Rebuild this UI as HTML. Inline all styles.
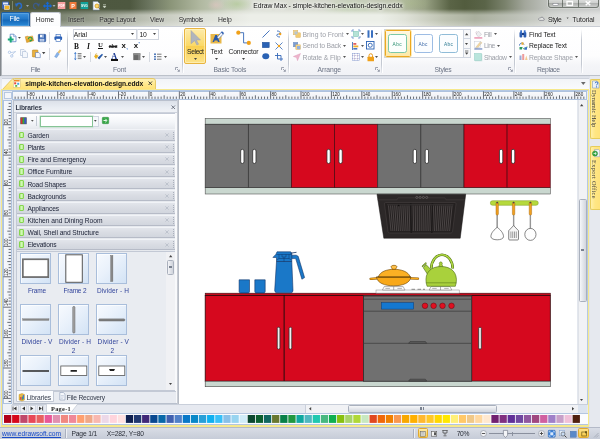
<!DOCTYPE html>
<html lang="en"><head><meta charset="utf-8"><title>Edraw Max - simple-kitchen-elevation-design.eddx</title>
<style>
html,body{margin:0;padding:0;background:#fff;}
body{width:600px;height:439px;overflow:hidden;font-family:'Liberation Sans',sans-serif;}
#app{will-change:transform;position:relative;width:600px;height:439px;overflow:hidden;background:#dfe3ea;}
#app div,#app span.t,#app svg{position:absolute;box-sizing:border-box;}
span.t{white-space:nowrap;display:block;}
svg{overflow:visible;}

</style></head>
<body>
<div id="app">
<div style="left:0px;top:0px;width:600px;height:26px;background:radial-gradient(ellipse 9px 6px at 216px 5px,rgba(232,196,196,.5),rgba(232,196,196,0)),radial-gradient(ellipse 16px 8px at 237px 4px,rgba(150,190,110,.4),rgba(150,190,110,0)),radial-gradient(ellipse 30px 9px at 350px 7px,rgba(150,186,118,.38),rgba(150,186,118,0)),radial-gradient(ellipse 22px 8px at 410px 3px,rgba(170,190,130,.3),rgba(170,190,130,0)),linear-gradient(to right,#4c563e 0px,#4e5840 130px,#6c7660 150px,#8a9478 170px,#b0b8a0 200px,#ccd2c2 230px,#dcdfd6 255px,#d9dcd2 300px,#ced3c4 350px,#bcc3ac 395px,#98a184 425px,#5a6446 450px,#525c3e 465px,#5a6448 485px,#7a826c 505px,#a3a79c 525px,#c2c5c1 550px,#cacccb 600px);"></div>
<div style="left:0px;top:8.5px;width:600px;height:17.5px;background:linear-gradient(to right,#6c7462 0px,#7e8674 62px,#9aa090 100px,#c0c4b8 150px,#dcdfd6 200px,#eceee8 250px,#ecefe8 380px,#dfe2d8 405px,#bcc1b0 445px,#aab09e 475px,#bcc0b6 515px,#d8dad8 560px,#e2e3e2 600px);-webkit-mask-image:linear-gradient(to bottom,rgba(0,0,0,0) 0px,rgba(0,0,0,.55) 3px,#000 6px);mask-image:linear-gradient(to bottom,rgba(0,0,0,0) 0px,rgba(0,0,0,.55) 3px,#000 6px);"></div>
<div style="left:0px;top:20px;width:600px;height:6px;background:linear-gradient(to bottom,rgba(255,255,255,0),rgba(255,255,255,.28));"></div>
<svg style="left:0;top:0" width="100" height="12" viewBox="0 0 100 12">
<rect x="2" y="1.5" width="7" height="7.5" rx="1" fill="#3c64b4"/><rect x="3" y="2.5" width="5" height="2" fill="#dfe8f8"/><rect x="4.5" y="5.5" width="5" height="4" fill="#f0b428" stroke="#fff" stroke-width=".5"/>
<rect x="12.3" y="1" width=".6" height="9" fill="#9aa48c"/>
<path d="M16.5 5.5 C17 2.5 21.5 2.5 21.5 6 C21.5 8 20 8.5 19 8.5" fill="none" stroke="#2a6cc8" stroke-width="1.5"/><path d="M15 3.2 L18.5 4.6 L16 7 Z" fill="#2a6cc8"/>
<path d="M26 5 l3 0 l-1.5 2z" fill="#9aa4b0"/>
<path d="M38.500 5.500 C38 2.500 33.500 2.500 33.500 6 C33.500 8 35 8.500 36 8.500" fill="none" stroke="#3a5c94" stroke-width="1.200" opacity=".85"/><path d="M40 3.200 L36.500 4.600 L39 7 Z" fill="#3a5c94" opacity=".85"/>
<path d="M47.500 1.500 l2 2.300 h-1.300 v1.500 h1.700 v-1.200 l2.300 1.900 l-2.300 1.900 v-1.200 h-1.700 v1.500 h1.300 l-2 2.300 l-2 -2.300 h1.300 v-1.500 h-1.700 v1.200 l-2.300 -1.900 l2.300 -1.900 v1.200 h1.700 v-1.500 h-1.300z" fill="#1868d0"/>
<path d="M52.500 5 l3 0 l-1.500 2z" fill="#a0aab4"/>
<rect x="57.700" y="2" width="7.600" height="7" fill="#f4a0a0"/><text x="61.500" y="6.800" font-size="3.200" font-weight="bold" fill="#fff" text-anchor="middle" font-family="Liberation Sans, sans-serif">PDF</text>
<rect x="69.500" y="2" width="7" height="7" fill="#ee7a3c"/><text x="73" y="7.600" font-size="5.400" font-weight="bold" fill="#fff" text-anchor="middle" font-family="Liberation Sans, sans-serif">P</text>
<rect x="80.600" y="2" width="7.600" height="7" fill="#12a098"/><text x="84.400" y="6.800" font-size="3.200" font-weight="bold" fill="#fff" text-anchor="middle" font-family="Liberation Sans, sans-serif">SVG</text>
<path d="M93 1.500 h4.500 l2 2 v6.500 h-6.500z" fill="#f4f6fa" stroke="#7a8aa6" stroke-width=".6"/><circle cx="97" cy="6" r="2" fill="#fdd66a" stroke="#c89018" stroke-width=".7"/><path d="M98.400 7.500 l1.600 1.800" stroke="#8a6a20" stroke-width="1"/>
</svg>
<svg style="left:102px;top:3px" width="6" height="6" viewBox="0 0 6 6"><path d="M1 1.500h3M1 3l1.500 2l1.500-2z" fill="#cfd6c6" stroke="#cfd6c6" stroke-width=".5"/></svg>
<span class="t" style="left:253.30px;top:1.97px;font-size:6.8px;line-height:8.84px;color:#111;letter-spacing:-0.056px;text-shadow:0 0 3px #fff,0 0 4px #fff,0 0 5px #fff;">Edraw Max - simple-kitchen-elevation-design.eddx</span>
<div style="left:547.5px;top:0px;width:51.5px;height:7.5px;border:1px solid rgba(60,70,60,.65);border-top:none;border-radius:0 0 3px 3px;background:linear-gradient(to bottom,rgba(255,255,255,.35),rgba(255,255,255,.08) 45%,rgba(0,0,0,.12) 50%,rgba(255,255,255,.1));box-shadow:0 0 0 .6px rgba(255,255,255,.45);"></div>
<div style="left:561.5px;top:0px;width:1px;height:7px;background:rgba(60,70,60,.6);"></div>
<div style="left:577.5px;top:0px;width:1px;height:7px;background:rgba(60,70,60,.6);"></div>
<svg style="left:548px;top:0" width="51" height="8" viewBox="0 0 51 8"><rect x="5" y="3.600" width="5" height="1.700" fill="#fff" stroke="#556" stroke-width=".3"/><rect x="19" y="1.400" width="5.500" height="4" fill="none" stroke="#fff" stroke-width="1.300"/><path d="M37.700 1.300 l4.600 4 M42.300 1.300 l-4.600 4" stroke="#fff" stroke-width="1.500"/></svg>
<div style="left:1px;top:12px;width:28.5px;height:13.5px;border-radius:2px 2px 0 0;border:1px solid #1b5fa8;border-bottom:none;background:linear-gradient(to bottom,#3f93dd 0%,#2378c8 45%,#1668b8 55%,#2a8ad8 100%);box-shadow:inset 0 0 0 .6px rgba(255,255,255,.3);"></div>
<span class="t" style="left:9.60px;top:14.97px;font-size:6.8px;line-height:8.84px;color:#fff;letter-spacing:-0.263px;">File</span>
<div style="left:29.8px;top:12px;width:31px;height:14.5px;border-radius:2.5px 2.5px 0 0;border:1px solid #c3c8d0;border-bottom:none;background:linear-gradient(to bottom,#ffffff,#fbfcfd);"></div>
<span class="t" style="left:35.80px;top:15.97px;font-size:6.8px;line-height:8.84px;color:#2a2a2a;letter-spacing:0.017px;">Home</span>
<span class="t" style="left:68.00px;top:15.97px;font-size:6.8px;line-height:8.84px;color:#2c2c2c;letter-spacing:-0.166px;text-shadow:0 0 2px rgba(255,255,255,.8);">Insert</span>
<span class="t" style="left:99.30px;top:15.97px;font-size:6.8px;line-height:8.84px;color:#2c2c2c;letter-spacing:-0.179px;text-shadow:0 0 2px rgba(255,255,255,.8);">Page Layout</span>
<span class="t" style="left:150.00px;top:15.97px;font-size:6.8px;line-height:8.84px;color:#2c2c2c;letter-spacing:-0.152px;text-shadow:0 0 2px rgba(255,255,255,.8);">View</span>
<span class="t" style="left:178.80px;top:15.97px;font-size:6.8px;line-height:8.84px;color:#2c2c2c;letter-spacing:-0.266px;text-shadow:0 0 2px rgba(255,255,255,.8);">Symbols</span>
<span class="t" style="left:218.00px;top:15.97px;font-size:6.8px;line-height:8.84px;color:#2c2c2c;letter-spacing:-0.045px;text-shadow:0 0 2px rgba(255,255,255,.8);">Help</span>
<svg style="left:537.500px;top:16px" width="6.500" height="5.800" viewBox="0 0 9 8"><path d="M2 6 h5.200 a1.400 1.400 0 0 0 .2-2.800 a2 2 0 0 0-3.800-.4 a1.600 1.600 0 0 0-1.600 3.200z" fill="rgba(255,255,255,.5)" stroke="#556" stroke-width=".7"/></svg>
<span class="t" style="left:548.00px;top:15.97px;font-size:6.8px;line-height:8.84px;color:#1c1c1c;letter-spacing:-0.362px;text-shadow:0 0 2px rgba(255,255,255,.8);">Style</span>
<svg style="left:566px;top:16.500px" width="3.500" height="2.800" viewBox="0 0 5 4"><path d="M.8 .8 h3 l-1.500 2z" fill="#555"/></svg>
<span class="t" style="left:572.50px;top:15.97px;font-size:6.8px;line-height:8.84px;color:#1c1c1c;letter-spacing:-0.051px;text-shadow:0 0 2px rgba(255,255,255,.8);">Tutorial</span>
<div style="left:0px;top:26px;width:600px;height:49.5px;background:linear-gradient(to bottom,#ffffff 0%,#fdfdfe 60%,#f4f5f8 80%,#f1f2f6 100%);border-top:1px solid #c9cdd4;border-bottom:1px solid #bcc1ca;"></div>
<div style="left:29.8px;top:25.5px;width:31px;height:1.5px;background:#fff;border-left:1px solid #c3c8d0;border-right:1px solid #c3c8d0;"></div>
<div style="left:0px;top:25.5px;width:2px;height:50.5px;background:linear-gradient(to right,#7e8388 0,#8a8f95 55%,#e4e7eb 100%);"></div>
<div style="left:67px;top:29px;width:1px;height:44px;background:linear-gradient(to bottom,rgba(190,196,206,0),#c4c9d2 25%,#c4c9d2 80%,rgba(190,196,206,.2));"></div>
<div style="left:68px;top:29px;width:1px;height:44px;background:rgba(255,255,255,.9);"></div>
<div style="left:181.5px;top:29px;width:1px;height:44px;background:linear-gradient(to bottom,rgba(190,196,206,0),#c4c9d2 25%,#c4c9d2 80%,rgba(190,196,206,.2));"></div>
<div style="left:182.5px;top:29px;width:1px;height:44px;background:rgba(255,255,255,.9);"></div>
<div style="left:288px;top:29px;width:1px;height:44px;background:linear-gradient(to bottom,rgba(190,196,206,0),#c4c9d2 25%,#c4c9d2 80%,rgba(190,196,206,.2));"></div>
<div style="left:289px;top:29px;width:1px;height:44px;background:rgba(255,255,255,.9);"></div>
<div style="left:381px;top:29px;width:1px;height:44px;background:linear-gradient(to bottom,rgba(190,196,206,0),#c4c9d2 25%,#c4c9d2 80%,rgba(190,196,206,.2));"></div>
<div style="left:382px;top:29px;width:1px;height:44px;background:rgba(255,255,255,.9);"></div>
<div style="left:514px;top:29px;width:1px;height:44px;background:linear-gradient(to bottom,rgba(190,196,206,0),#c4c9d2 25%,#c4c9d2 80%,rgba(190,196,206,.2));"></div>
<div style="left:515px;top:29px;width:1px;height:44px;background:rgba(255,255,255,.9);"></div>
<div style="left:581px;top:29px;width:1px;height:44px;background:linear-gradient(to bottom,rgba(190,196,206,0),#c4c9d2 25%,#c4c9d2 80%,rgba(190,196,206,.2));"></div>
<div style="left:582px;top:29px;width:1px;height:44px;background:rgba(255,255,255,.9);"></div>
<span class="t" style="left:30.80px;top:65.97px;font-size:6.8px;line-height:8.84px;color:#6b7384;letter-spacing:-0.438px;">File</span>
<span class="t" style="left:113.00px;top:65.97px;font-size:6.8px;line-height:8.84px;color:#6b7384;letter-spacing:-0.150px;">Font</span>
<span class="t" style="left:213.40px;top:65.97px;font-size:6.8px;line-height:8.84px;color:#6b7384;letter-spacing:-0.125px;">Basic Tools</span>
<span class="t" style="left:317.60px;top:65.97px;font-size:6.8px;line-height:8.84px;color:#6b7384;letter-spacing:-0.112px;">Arrange</span>
<span class="t" style="left:434.60px;top:65.97px;font-size:6.8px;line-height:8.84px;color:#6b7384;letter-spacing:-0.285px;">Styles</span>
<span class="t" style="left:537.00px;top:65.97px;font-size:6.8px;line-height:8.84px;color:#6b7384;letter-spacing:-0.334px;">Replace</span>
<svg style="left:174.5px;top:67px" width="5" height="5" viewBox="0 0 5 5"><path d="M.5 3V.5H3" fill="none" stroke="#8a90a0" stroke-width=".8"/><path d="M2 2l2.200 2.200M4.400 2.600v1.800h-1.800" fill="none" stroke="#8a90a0" stroke-width=".8"/></svg>
<svg style="left:280.5px;top:67px" width="5" height="5" viewBox="0 0 5 5"><path d="M.5 3V.5H3" fill="none" stroke="#8a90a0" stroke-width=".8"/><path d="M2 2l2.200 2.200M4.400 2.600v1.800h-1.800" fill="none" stroke="#8a90a0" stroke-width=".8"/></svg>
<svg style="left:374.5px;top:67px" width="5" height="5" viewBox="0 0 5 5"><path d="M.5 3V.5H3" fill="none" stroke="#8a90a0" stroke-width=".8"/><path d="M2 2l2.200 2.200M4.400 2.600v1.800h-1.800" fill="none" stroke="#8a90a0" stroke-width=".8"/></svg>
<svg style="left:507.5px;top:67px" width="5" height="5" viewBox="0 0 5 5"><path d="M.5 3V.5H3" fill="none" stroke="#8a90a0" stroke-width=".8"/><path d="M2 2l2.200 2.200M4.400 2.600v1.800h-1.800" fill="none" stroke="#8a90a0" stroke-width=".8"/></svg>
<svg style="left:7px;top:33px" width="11" height="10" viewBox="0 0 11 10"><path d="M3.200 1.200h3.600l2.200 2.200v5.300h-5.800z" fill="#fafcff" stroke="#4a78c0" stroke-width=".7"/><path d="M6.600 1.400v2.200h2.200" fill="none" stroke="#4a78c0" stroke-width=".5"/><path d="M3.700 3.600v5.800M.8 6.500h5.800" stroke="#18a878" stroke-width="1.900"/></svg>
<svg style="left:18.355px;top:36.65px" width="2.89" height="1.87" viewBox="0 0 3.400 2.200"><path d="M0 0h3.400l-1.700 2.200z" fill="#444"/></svg>
<svg style="left:24.5px;top:34px" width="9" height="9" viewBox="0 0 9 9"><g transform="rotate(-14 4.500 4.500)"><path d="M.8 1.800h2.600l.9.900h3.700v5h-7.200z" fill="#e8a830" stroke="#b87c10" stroke-width=".4"/><path d="M.8 3.400h7.200" stroke="#f4c868" stroke-width=".6"/></g><path d="M3.300 5.200a1.900 1.900 0 1 1 2.200 1.800" fill="none" stroke="#28a048" stroke-width="1.100"/><path d="M6.600 6.200l-1.700 1.700l-.4-2.200z" fill="#28a048"/></svg>
<svg style="left:38px;top:34px" width="8" height="8" viewBox="0 0 8 8"><rect x=".3" y=".3" width="7.400" height="7.400" rx=".7" fill="#2d5fb0" stroke="#1f478f" stroke-width=".5"/><rect x="2" y=".7" width="4" height="2.700" fill="#f0f4fc"/><rect x="4.600" y="1" width=".9" height="2" fill="#2d5fb0"/><rect x="1.700" y="4.800" width="4.600" height="2.700" fill="#dfe7f6"/><path d="M2.300 5.700h3.400M2.300 6.600h3.400" stroke="#5a80c4" stroke-width=".4"/></svg>
<div style="left:49.2px;top:31.5px;width:1px;height:12px;background:#d6dae1;"></div>
<svg style="left:54px;top:34px" width="8.5" height="8" viewBox="0 0 8.5 8"><rect x="2" y=".5" width="4.500" height="2.500" fill="#f0f4fc" stroke="#3468b8" stroke-width=".6"/><rect x=".4" y="2.600" width="7.700" height="3.400" rx=".9" fill="#2a60b8"/><rect x="2" y="4.700" width="4.500" height="2.700" fill="#fff" stroke="#3468b8" stroke-width=".6"/></svg>
<svg style="left:8px;top:49.5px" width="8.5" height="8" viewBox="0 0 8.5 8"><path d="M2.600 2.600l5.200-.9M4 5l3.600-4" stroke="#b4c8e4" stroke-width=".8"/><circle cx="1.500" cy="2.300" r="1.200" fill="none" stroke="#a8c0e4" stroke-width=".8"/><circle cx="3.800" cy="6" r="1.200" fill="none" stroke="#a8c0e4" stroke-width=".8"/></svg>
<svg style="left:20px;top:49px" width="8" height="9" viewBox="0 0 8 9"><path d="M.5 .5h3.500l1.500 1.500v4.500h-5z" fill="#f4f7fc" stroke="#a8b8d4" stroke-width=".6"/><path d="M2.500 2.500h3.500l1.500 1.500v4.500h-5z" fill="#f4f7fc" stroke="#a8b8d4" stroke-width=".6"/></svg>
<svg style="left:32px;top:49px" width="9" height="9" viewBox="0 0 9 9"><rect x=".4" y="1" width="5.500" height="7" rx=".6" fill="#e8b040" stroke="#b07c18" stroke-width=".5"/><path d="M3.500 3.500h3.300l1.500 1.500v3.600h-4.800z" fill="#f6f8fc" stroke="#5d78b0" stroke-width=".6"/></svg>
<svg style="left:42.3px;top:51.8px" width="3.4" height="2.2" viewBox="0 0 3.400 2.200"><path d="M0 0h3.400l-1.700 2.200z" fill="#444"/></svg>
<div style="left:49.2px;top:48px;width:1px;height:12px;background:#d6dae1;"></div>
<svg style="left:54px;top:49px" width="8" height="9" viewBox="0 0 8 9"><path d="M5.800 .4l1.600 1.200l-2.400 3.200l-1.600-1.200z" fill="#e8c070"/><path d="M3.200 3.400l2 1.500l-2.600 3.800l-2-1z" fill="#8ab4e8" stroke="#5a8ad0" stroke-width=".4"/></svg>
<div style="left:72.5px;top:29px;width:64px;height:10.5px;background:#fff;border:1px solid #d0d5de;"></div>
<div style="left:136.5px;top:29px;width:22px;height:10.5px;background:#fff;border:1px solid #d0d5de;border-left:1px solid #e4e7ec;"></div>
<span class="t" style="left:73.80px;top:30.98px;font-size:6.8px;line-height:8.84px;color:#222;letter-spacing:-0.079px;">Arial</span>
<svg style="left:130.77px;top:33.1px" width="3.06" height="1.98" viewBox="0 0 3.400 2.200"><path d="M0 0h3.400l-1.700 2.200z" fill="#444"/></svg>
<span class="t" style="left:139.40px;top:30.98px;font-size:6.8px;line-height:8.84px;color:#222;letter-spacing:-0.280px;">10</span>
<svg style="left:152.77px;top:33.1px" width="3.06" height="1.98" viewBox="0 0 3.400 2.200"><path d="M0 0h3.400l-1.700 2.200z" fill="#444"/></svg>
<span class="t" style="left:74.10px;top:41.98px;font-size:7.4px;line-height:9.62px;color:#111;letter-spacing:0.000px;font-weight:bold;font-family:'Liberation Serif', serif;">B</span>
<span class="t" style="left:87.10px;top:41.98px;font-size:7.4px;line-height:9.62px;color:#111;letter-spacing:0.000px;font-weight:bold;font-style:italic;font-family:'Liberation Serif', serif;">I</span>
<span class="t" style="left:98.00px;top:40.98px;font-size:6.8px;line-height:8.84px;color:#111;letter-spacing:0.000px;font-weight:bold;font-family:'Liberation Serif', serif;text-decoration:underline;">U</span>
<span class="t" style="left:108.80px;top:42.98px;font-size:5.6px;line-height:7.28px;color:#222;letter-spacing:-0.413px;font-weight:bold;text-decoration:line-through;">abc</span>
<span class="t" style="left:121.60px;top:40.98px;font-size:7.8px;line-height:10.14px;color:#111;letter-spacing:0.000px;font-weight:bold;">x</span>
<span class="t" style="left:126.20px;top:43.98px;font-size:6px;line-height:7.8px;color:#2a6cc8;letter-spacing:0.000px;font-weight:bold;">,</span>
<span class="t" style="left:133.80px;top:40.98px;font-size:7.8px;line-height:10.14px;color:#111;letter-spacing:0.000px;font-weight:bold;">x</span>
<span class="t" style="left:138.20px;top:40.98px;font-size:6px;line-height:7.8px;color:#2a6cc8;letter-spacing:0.000px;font-weight:bold;">’</span>
<svg style="left:73.5px;top:52px" width="8" height="8.5" viewBox="0 0 8 8.5"><path d="M1.300 0l1.300 1.800h-2.600zM1.300 8.300l1.300-1.800h-2.600z" fill="#2a6cc8"/><path d="M1.300 1.500v5" stroke="#2a6cc8" stroke-width=".7"/><path d="M3.700 1.500h3.800M3.700 3.200h3.800M3.700 4.900h3.800M3.700 6.600h3.800" stroke="#777" stroke-width=".9"/></svg>
<svg style="left:82.77px;top:55.5px" width="3.06" height="1.98" viewBox="0 0 3.400 2.200"><path d="M0 0h3.400l-1.700 2.200z" fill="#555"/></svg>
<div style="left:89.5px;top:51.5px;width:1px;height:10px;background:#d5d9e0;"></div>
<svg style="left:93.5px;top:52.5px" width="9" height="7" viewBox="0 0 9 7"><path d="M0 3.200l2-1.700l2.500 1.200l-2.500 3.300z" fill="#e8b020"/><path d="M3.500 4.800l4.500-4l1 1l-3.800 4.800z" fill="#2a5caa"/><path d="M1 1.200l1.200.4M2.500.3l.5 1" stroke="#c89010" stroke-width=".6"/></svg>
<svg style="left:103.87px;top:55.5px" width="3.06" height="1.98" viewBox="0 0 3.400 2.200"><path d="M0 0h3.400l-1.700 2.200z" fill="#555"/></svg>
<span class="t" style="left:111.20px;top:51.98px;font-size:8.2px;line-height:10.66px;color:#1d3c94;letter-spacing:0.000px;font-weight:bold;font-family:'Liberation Serif', serif;">A</span>
<div style="left:110.5px;top:59px;width:7.5px;height:1.8px;background:#111;"></div>
<svg style="left:120.77px;top:55.5px" width="3.06" height="1.98" viewBox="0 0 3.400 2.200"><path d="M0 0h3.400l-1.700 2.200z" fill="#555"/></svg>
<svg style="left:132.5px;top:52.5px" width="8" height="7.5" viewBox="0 0 8 7.5"><rect x=".3" y=".3" width="7" height="6.800" fill="#6a6a6a"/><rect x=".3" y=".3" width="7" height="1.800" fill="#8a8a8a"/><rect x="5" y=".3" width="2.300" height="6.800" fill="#9a9a9a" opacity=".6"/></svg>
<svg style="left:141.67px;top:55.5px" width="3.06" height="1.98" viewBox="0 0 3.400 2.200"><path d="M0 0h3.400l-1.700 2.200z" fill="#555"/></svg>
<div style="left:148.5px;top:51.5px;width:1px;height:10px;background:#d5d9e0;"></div>
<svg style="left:153.5px;top:52.5px" width="8" height="7.5" viewBox="0 0 8 7.5"><circle cx="1" cy="1.200" r=".9" fill="#2a5caa"/><circle cx="1" cy="3.700" r=".9" fill="#2a5caa"/><circle cx="1" cy="6.200" r=".9" fill="#2a5caa"/><path d="M3 1.200h4.500M3 3.700h4.500M3 6.200h4.500" stroke="#777" stroke-width="1"/></svg>
<svg style="left:164.27px;top:55.5px" width="3.06" height="1.98" viewBox="0 0 3.400 2.200"><path d="M0 0h3.400l-1.700 2.200z" fill="#555"/></svg>
<div style="left:184.4px;top:27.8px;width:21.8px;height:35.8px;border:1px solid #e8b440;border-radius:2px;background:linear-gradient(to bottom,#fdebaa 0%,#fbd968 49%,#f9cf50 51%,#fce38a 100%);box-shadow:inset 0 0 0 .7px rgba(255,245,200,.8);"></div>
<svg style="left:189.5px;top:30px" width="12" height="15" viewBox="0 0 12 15"><path d="M1 .5l9.500 9.500h-4.200l2.300 4.200l-1.700.8l-2.200-4.300l-3.700 3z" fill="#b0b4bc" stroke="#9da2ac" stroke-width=".5"/></svg>
<span class="t" style="left:187.00px;top:47.98px;font-size:6.8px;line-height:8.84px;color:#222;letter-spacing:-0.382px;">Select</span>
<svg style="left:193.87px;top:57.6px" width="3.06" height="1.98" viewBox="0 0 3.400 2.200"><path d="M0 0h3.400l-1.700 2.200z" fill="#444"/></svg>
<svg style="left:209.5px;top:31px" width="14" height="13" viewBox="0 0 14 13"><rect x=".5" y="3" width="11" height="9.500" fill="#e8b84a"/><path d="M2.500 11l2.800-7h1.600l2.800 7h-1.800l-.5-1.600h-2.800l-.5 1.600z" fill="#2858a8"/><path d="M7 6.500l4.500-5.500l2 1.800l-4.800 5z" fill="#f4f6fa" stroke="#3060b0" stroke-width=".6"/><path d="M11 1.500l1-1.200l2 1.800l-1 1.200z" fill="#3060b0"/></svg>
<span class="t" style="left:210.60px;top:47.98px;font-size:6.8px;line-height:8.84px;color:#222;letter-spacing:-0.166px;">Text</span>
<svg style="left:214.97px;top:57.6px" width="3.06" height="1.98" viewBox="0 0 3.400 2.200"><path d="M0 0h3.400l-1.700 2.200z" fill="#444"/></svg>
<svg style="left:236px;top:29.5px" width="16" height="16" viewBox="0 0 16 16"><path d="M2.300 2.700h5.300v10.200h5" fill="none" stroke="#3468b8" stroke-width=".9"/><circle cx="2.300" cy="2.700" r="2.100" fill="#f0a018"/><circle cx="12.800" cy="12.900" r="2.100" fill="#f0a018"/></svg>
<span class="t" style="left:228.40px;top:47.98px;font-size:6.8px;line-height:8.84px;color:#222;letter-spacing:-0.151px;">Connector</span>
<svg style="left:241.87px;top:57.6px" width="3.06" height="1.98" viewBox="0 0 3.400 2.200"><path d="M0 0h3.400l-1.700 2.200z" fill="#444"/></svg>
<svg style="left:261.5px;top:30px" width="8" height="8" viewBox="0 0 8 8"><path d="M.5 7.500l7-7" stroke="#3468b8" stroke-width=".9"/></svg>
<svg style="left:261.8px;top:41.8px" width="7.5" height="6" viewBox="0 0 7.5 6"><rect x=".3" y=".3" width="6.900" height="5.400" fill="#2a62b4" stroke="#1e4c94" stroke-width=".5"/></svg>
<svg style="left:261.8px;top:52.8px" width="7.5" height="6.5" viewBox="0 0 7.5 6.5"><ellipse cx="3.750" cy="3.250" rx="3.500" ry="3" fill="#2a62b4"/></svg>
<svg style="left:274.5px;top:30px" width="7" height="8" viewBox="0 0 7 8"><path d="M2 1c4 0 4 3 1.500 3s-2.500 3 1.500 3" fill="none" stroke="#3468b8" stroke-width=".9"/><circle cx="5.200" cy="4" r="1.200" fill="#f0a018"/></svg>
<svg style="left:274.5px;top:41.5px" width="8" height="8" viewBox="0 0 8 8"><path d="M.5 .5l7 7M7.500 .5l-7 7" stroke="#3468b8" stroke-width=".8"/><circle cx="4" cy="4" r="1.300" fill="#f0a018"/></svg>
<svg style="left:274.5px;top:52.5px" width="8" height="8" viewBox="0 0 8 8"><path d="M2.500 0v6h5.500M0 2.500h6v5.500" fill="none" stroke="#3468b8" stroke-width=".9"/></svg>
<svg style="left:292.5px;top:30px" width="8" height="8" viewBox="0 0 8 8"><g opacity="0.72"><rect x=".3" y=".3" width="4.500" height="4.500" fill="#f0c050" stroke="#c89020" stroke-width=".4"/><rect x="2.800" y="2.800" width="4.700" height="4.700" fill="#f0b838" stroke="#c89020" stroke-width=".4"/><rect x="1.500" y="1.500" width="3" height="3" fill="#8ab0e0" opacity=".8"/></g></svg>
<svg style="left:292.5px;top:41.5px" width="8" height="8" viewBox="0 0 8 8"><g opacity="0.72"><rect x=".3" y=".3" width="4.500" height="4.500" fill="#4a78c0" stroke="#2a58a0" stroke-width=".4"/><rect x="2.800" y="2.800" width="4.700" height="4.700" fill="#f0c050" stroke="#c89020" stroke-width=".4"/><rect x="4" y="4" width="3.200" height="3.200" fill="#6a94d4"/></g></svg>
<svg style="left:292.5px;top:53px" width="8" height="8" viewBox="0 0 8 8"><g opacity="0.72"><path d="M.3 3.500l7.200-3l-3 7.200l-1-3.200z" fill="#e89ab8" stroke="#d070a0" stroke-width=".4"/></g></svg>
<span class="t" style="left:302.60px;top:30.98px;font-size:6.8px;line-height:8.84px;color:#9da0a8;letter-spacing:-0.013px;">Bring to Front</span>
<span class="t" style="left:302.60px;top:41.98px;font-size:6.8px;line-height:8.84px;color:#9da0a8;letter-spacing:-0.169px;">Send to Back</span>
<span class="t" style="left:302.60px;top:53.98px;font-size:6.8px;line-height:8.84px;color:#9da0a8;letter-spacing:-0.099px;">Rotate &amp; Flip</span>
<svg style="left:345.77px;top:33.1px" width="3.06" height="1.98" viewBox="0 0 3.400 2.200"><path d="M0 0h3.400l-1.700 2.200z" fill="#555"/></svg>
<svg style="left:343.47px;top:44.8px" width="3.06" height="1.98" viewBox="0 0 3.400 2.200"><path d="M0 0h3.400l-1.700 2.200z" fill="#555"/></svg>
<svg style="left:343.07px;top:56.3px" width="3.06" height="1.98" viewBox="0 0 3.400 2.200"><path d="M0 0h3.400l-1.700 2.200z" fill="#555"/></svg>
<svg style="left:351.5px;top:30px" width="8" height="8" viewBox="0 0 8 8"><g opacity="0.72"><rect x="1.500" y="1.500" width="5" height="5" fill="#9ad8c8" stroke="#38a890" stroke-width=".5"/><path d="M0 2v-2h2M6 0h2v2M8 6v2h-2M2 8h-2v-2" fill="none" stroke="#2a62b4" stroke-width=".8"/></g></svg>
<svg style="left:360.77px;top:33.1px" width="3.06" height="1.98" viewBox="0 0 3.400 2.200"><path d="M0 0h3.400l-1.700 2.200z" fill="#555"/></svg>
<svg style="left:352px;top:41.5px" width="7" height="8" viewBox="0 0 7 8"><path d="M.5 0v8" stroke="#2a62b4" stroke-width=".8"/><rect x="1.300" y="1" width="3" height="1.800" fill="#e06060"/><rect x="1.300" y="3.500" width="5" height="1.800" fill="#f0b030"/><rect x="1.300" y="6" width="4" height="1.600" fill="#4a78c0"/></svg>
<svg style="left:360.77px;top:44.8px" width="3.06" height="1.98" viewBox="0 0 3.400 2.200"><path d="M0 0h3.400l-1.700 2.200z" fill="#555"/></svg>
<svg style="left:351.5px;top:53px" width="8" height="8" viewBox="0 0 8 8"><g opacity="0.72"><path d="M2.500 0v8M5.500 0v8M0 2.500h8M0 5.500h8" stroke="#7a6aa8" stroke-width=".6" stroke-dasharray="1 .6"/><rect x=".3" y=".3" width="7.400" height="7.400" fill="none" stroke="#5a78c0" stroke-width=".5"/></g></svg>
<svg style="left:360.77px;top:56.3px" width="3.06" height="1.98" viewBox="0 0 3.400 2.200"><path d="M0 0h3.400l-1.700 2.200z" fill="#555"/></svg>
<svg style="left:367px;top:30px" width="7" height="8" viewBox="0 0 7 8"><rect x=".5" y=".3" width="2" height="7.400" fill="#3a70c0"/><rect x="4" y=".3" width="2" height="7.400" fill="#3a70c0"/></svg>
<svg style="left:375.27px;top:33.1px" width="3.06" height="1.98" viewBox="0 0 3.400 2.200"><path d="M0 0h3.400l-1.700 2.200z" fill="#555"/></svg>
<svg style="left:366.3px;top:41.3px" width="8.5" height="8.5" viewBox="0 0 8.5 8.5"><rect x=".5" y=".5" width="7.500" height="7.500" fill="none" stroke="#2a62b4" stroke-width=".9"/><circle cx="4.250" cy="4.250" r="2" fill="none" stroke="#2a62b4" stroke-width=".9"/></svg>
<svg style="left:366.8px;top:52.5px" width="7.5" height="8.5" viewBox="0 0 7.5 8.5"><path d="M2 4v-1.500a1.750 1.750 0 0 1 3.500 0v1.500" fill="none" stroke="#e89818" stroke-width="1"/><rect x=".5" y="3.800" width="6.500" height="4.500" rx=".5" fill="#f0a018"/></svg>
<svg style="left:375.27px;top:56.3px" width="3.06" height="1.98" viewBox="0 0 3.400 2.200"><path d="M0 0h3.400l-1.700 2.200z" fill="#555"/></svg>
<div style="left:384px;top:29px;width:86.5px;height:28.5px;background:#fff;border:1px solid #d0d6e0;"></div>
<div style="left:385px;top:30px;width:25.5px;height:26.5px;border:1.500px solid #eda820;border-radius:1.500px;background:linear-gradient(to bottom,#fff8e0,#fde9a8);box-shadow:0 0 0 .5px #f8d878;"></div>
<div style="left:388px;top:33.5px;width:18.8px;height:19.2px;border:1px solid #7cc8a8;border-radius:2.500px;background:#fbfffd;"></div>
<div style="left:414px;top:33.5px;width:18.6px;height:19.2px;border:1px solid #9cbce4;border-radius:2.500px;background:#fbfdff;"></div>
<div style="left:439.4px;top:33.5px;width:18.8px;height:19.2px;border:1px solid #90bcd8;border-radius:2.500px;background:#fbfdff;"></div>
<span class="t" style="left:392.60px;top:41.98px;font-size:4.8px;line-height:6.24px;color:#2a9070;letter-spacing:0.378px;">Abc</span>
<span class="t" style="left:418.60px;top:41.98px;font-size:4.8px;line-height:6.24px;color:#3a68a8;letter-spacing:0.311px;">Abc</span>
<span class="t" style="left:444.00px;top:41.98px;font-size:4.8px;line-height:6.24px;color:#2a7890;letter-spacing:0.378px;">Abc</span>
<div style="left:462.5px;top:29px;width:8px;height:28.5px;background:#f6f7f9;border:1px solid #d0d6e0;"></div>
<div style="left:462.5px;top:38.3px;width:8px;height:1px;background:#d0d6e0;"></div>
<div style="left:462.5px;top:47.6px;width:8px;height:1px;background:#d0d6e0;"></div>
<svg style="left:465px;top:33px" width="3.4" height="2.2" viewBox="0 0 3.4 2.2"><path d="M0 2.200h3.400l-1.700-2.200z" fill="#444"/></svg>
<svg style="left:465.17px;top:42.6px" width="3.06" height="1.98" viewBox="0 0 3.400 2.200"><path d="M0 0h3.400l-1.700 2.200z" fill="#444"/></svg>
<svg style="left:465px;top:50.5px" width="3.4" height="4" viewBox="0 0 3.4 4"><path d="M0 0h3.400" stroke="#444" stroke-width=".7"/><path d="M0 1.500h3.400l-1.700 2.200z" fill="#444"/></svg>
<svg style="left:473.5px;top:29.5px" width="9" height="9" viewBox="0 0 9 9"><g opacity="0.72"><path d="M2 4l2.500-3l3 3.500l-3 2.500z" fill="#e8e8ec" stroke="#a8a8b0" stroke-width=".5"/><path d="M3 1.500c-1.500 0-1.500 2 0 2.500" fill="none" stroke="#c0a0b0" stroke-width=".6"/><rect x=".3" y="7" width="8" height="1.800" fill="#e888a8"/></g></svg>
<svg style="left:473.5px;top:41px" width="9" height="9" viewBox="0 0 9 9"><g opacity="0.72"><path d="M2 6l4.500-5.500l1.500 1.200l-4.500 5.500l-2 .6z" fill="#f0c878" stroke="#b8a070" stroke-width=".4"/><rect x=".3" y="7.200" width="8" height="1.500" fill="#5a78b8"/><rect x=".3" y=".5" width="6" height="6" fill="none" stroke="#b0b8c8" stroke-width=".5"/></g></svg>
<svg style="left:473.5px;top:52.5px" width="8.5" height="8.5" viewBox="0 0 8.5 8.5"><g opacity="0.72"><rect x="1" y="1" width="7.300" height="7.300" fill="#b8d8d4"/><rect x=".3" y=".3" width="7.200" height="7.200" fill="#a0dcd0" stroke="#78c0b4" stroke-width=".5"/></g></svg>
<span class="t" style="left:484.00px;top:30.98px;font-size:6.8px;line-height:8.84px;color:#9da0a8;letter-spacing:-0.270px;">Fill</span>
<span class="t" style="left:484.00px;top:41.98px;font-size:6.8px;line-height:8.84px;color:#9da0a8;letter-spacing:-0.538px;">Line</span>
<span class="t" style="left:484.00px;top:53.98px;font-size:6.8px;line-height:8.84px;color:#9da0a8;letter-spacing:-0.310px;">Shadow</span>
<svg style="left:493.97px;top:33.3px" width="3.06" height="1.98" viewBox="0 0 3.400 2.200"><path d="M0 0h3.400l-1.700 2.200z" fill="#555"/></svg>
<svg style="left:497.17px;top:44.9px" width="3.06" height="1.98" viewBox="0 0 3.400 2.200"><path d="M0 0h3.400l-1.700 2.200z" fill="#555"/></svg>
<svg style="left:508.77px;top:56.2px" width="3.06" height="1.98" viewBox="0 0 3.400 2.200"><path d="M0 0h3.400l-1.700 2.200z" fill="#555"/></svg>
<svg style="left:519px;top:30px" width="8" height="8" viewBox="0 0 8 8"><rect x=".5" y="2" width="2.800" height="5.500" rx="1" fill="#2a5cb0"/><rect x="4.500" y="2" width="2.800" height="5.500" rx="1" fill="#2a5cb0"/><rect x="1.200" y=".3" width="1.800" height="3" fill="#3a70c8"/><rect x="4.800" y=".3" width="1.800" height="3" fill="#3a70c8"/><rect x="3" y="3" width="2" height="2" fill="#1a3c80"/></svg>
<svg style="left:519px;top:41.5px" width="9" height="8" viewBox="0 0 9 8"><path d="M.5 3.500c0-3 4-3 4.500-1" fill="none" stroke="#2a62b4" stroke-width=".9"/><rect x="2.500" y=".3" width="2" height="2.500" fill="#f0b030"/><path d="M8 4.500c0 3-4 3-4.500 1" fill="none" stroke="#28a050" stroke-width=".9"/><rect x="5.500" y="5.200" width="2.500" height="2.500" fill="#3a70c8"/><rect x=".5" y="5" width="2.500" height="2.500" fill="#2a9a60"/></svg>
<svg style="left:519px;top:53px" width="9" height="8" viewBox="0 0 9 8"><g opacity="0.72"><rect x=".5" y="2.500" width="2" height="4.500" fill="#7a90c8"/><rect x="3.200" y="1" width="2" height="6" fill="#e87878"/><path d="M6 7l1.300-4.500l1.300 4.500z" fill="#f0b868"/></g></svg>
<span class="t" style="left:529.00px;top:30.98px;font-size:6.8px;line-height:8.84px;color:#222;letter-spacing:-0.120px;">Find Text</span>
<span class="t" style="left:529.00px;top:41.98px;font-size:6.8px;line-height:8.84px;color:#222;letter-spacing:-0.124px;">Replace Text</span>
<span class="t" style="left:529.00px;top:53.98px;font-size:6.8px;line-height:8.84px;color:#9da0a8;letter-spacing:-0.214px;">Replace Shape</span>
<svg style="left:575.47px;top:56.2px" width="3.06" height="1.98" viewBox="0 0 3.400 2.200"><path d="M0 0h3.400l-1.700 2.200z" fill="#555"/></svg>
<div style="left:0px;top:75.5px;width:600px;height:14px;background:linear-gradient(to bottom,#d9dde6 0,#e3e6ee 3px,#eceef4 14px);"></div>
<div style="left:2px;top:77.5px;width:586.5px;height:12px;background:linear-gradient(to bottom,#f2f4f8,#fafbfd);border-top:1px solid #cdd2dc;"></div>
<svg style="left:1px;top:77.5px" width="160" height="12.5" viewBox="0 0 160 12.5"><defs><linearGradient id="tg" x1="0" y1="0" x2="0" y2="1"><stop offset="0" stop-color="#fff3b8"/><stop offset=".5" stop-color="#ffe88a"/><stop offset="1" stop-color="#ffe070"/></linearGradient></defs><path d="M0.500 12.500 L10.500 1.800 Q11.500 .500 13.500 .500 H152 Q154.500 .500 154.500 3 V12.500z" fill="url(#tg)" stroke="#e2c050" stroke-width=".8"/></svg>
<svg style="left:13px;top:79px" width="8" height="9" viewBox="0 0 8 9"><rect x=".3" y=".3" width="7" height="8" fill="#fdfdf8" stroke="#c8b060" stroke-width=".4"/><rect x="1" y="1" width="5.600" height="1.500" fill="#f08828"/><rect x="1.200" y="3.300" width="2" height="2" fill="#e84838"/><rect x="4.200" y="3.800" width="2" height="2" fill="#48a8e0"/><rect x="2.200" y="6" width="2" height="1.800" fill="#58b848"/></svg>
<span class="t" style="left:25.30px;top:79.97px;font-size:6.7px;line-height:8.71px;color:#111;letter-spacing:-0.036px;font-weight:bold;">simple-kitchen-elevation-design.eddx</span>
<svg style="left:147.8px;top:80.8px" width="4.5" height="4.5" viewBox="0 0 4.5 4.5"><path d="M.5 .5l3.500 3.500M4 .5l-3.500 3.500" stroke="#333" stroke-width=".9"/></svg>
<svg style="left:580.8px;top:81.8px" width="4.6" height="3" viewBox="0 0 4.6 3"><path d="M0 0h4.600l-2.300 3z" fill="#6a6a6a"/></svg>
<div style="left:1px;top:89.3px;width:588px;height:337.5px;border:1.500px solid #f5e88c;border-bottom-width:2px;background:#e3e7ee;box-shadow:inset 0 0 0 1px #b4c8e4;"></div>
<div style="left:2.5px;top:90.8px;width:585.5px;height:9px;background:#e9edf3;"></div><div style="left:3.5px;top:91.5px;width:8px;height:7.5px;background:#f4f6fa;border:1px solid #b8c8e0;"></div><div style="left:12px;top:91px;width:574.5px;height:8.5px;background:linear-gradient(to bottom,#f8f9fc,#edf0f5);border:1px solid #aec2de;"></div><svg style="left:12px;top:91px" width="574.5" height="8.5" viewBox="0 0 574.5 8.5"><g stroke="#3a3f4a" stroke-width=".75" fill="none"><path d="M3.14 7.90V5.60" /><path d="M6.18 7.90V5.60" /><path d="M9.22 7.90V5.60" /><path d="M12.26 7.90V5.60" /><path d="M15.30 7.90V0.40" /><path d="M18.34 7.90V5.60" /><path d="M21.38 7.90V5.60" /><path d="M24.43 7.90V5.60" /><path d="M27.47 7.90V5.60" /><path d="M30.51 7.90V4.30" /><path d="M33.55 7.90V5.60" /><path d="M36.59 7.90V5.60" /><path d="M39.63 7.90V5.60" /><path d="M42.67 7.90V5.60" /><path d="M45.71 7.90V0.40" /><path d="M48.76 7.90V5.60" /><path d="M51.80 7.90V5.60" /><path d="M54.84 7.90V5.60" /><path d="M57.88 7.90V5.60" /><path d="M60.92 7.90V4.30" /><path d="M63.96 7.90V5.60" /><path d="M67.00 7.90V5.60" /><path d="M70.04 7.90V5.60" /><path d="M73.08 7.90V5.60" /><path d="M76.13 7.90V0.40" /><path d="M79.17 7.90V5.60" /><path d="M82.21 7.90V5.60" /><path d="M85.25 7.90V5.60" /><path d="M88.29 7.90V5.60" /><path d="M91.33 7.90V4.30" /><path d="M94.37 7.90V5.60" /><path d="M97.41 7.90V5.60" /><path d="M100.46 7.90V5.60" /><path d="M103.50 7.90V5.60" /><path d="M106.54 7.90V0.40" /><path d="M109.58 7.90V5.60" /><path d="M112.62 7.90V5.60" /><path d="M115.66 7.90V5.60" /><path d="M118.70 7.90V5.60" /><path d="M121.74 7.90V4.30" /><path d="M124.79 7.90V5.60" /><path d="M127.83 7.90V5.60" /><path d="M130.87 7.90V5.60" /><path d="M133.91 7.90V5.60" /><path d="M136.95 7.90V0.40" /><path d="M139.99 7.90V5.60" /><path d="M143.03 7.90V5.60" /><path d="M146.07 7.90V5.60" /><path d="M149.11 7.90V5.60" /><path d="M152.16 7.90V4.30" /><path d="M155.20 7.90V5.60" /><path d="M158.24 7.90V5.60" /><path d="M161.28 7.90V5.60" /><path d="M164.32 7.90V5.60" /><path d="M167.36 7.90V0.40" /><path d="M170.40 7.90V5.60" /><path d="M173.44 7.90V5.60" /><path d="M176.49 7.90V5.60" /><path d="M179.53 7.90V5.60" /><path d="M182.57 7.90V4.30" /><path d="M185.61 7.90V5.60" /><path d="M188.65 7.90V5.60" /><path d="M191.69 7.90V5.60" /><path d="M194.73 7.90V5.60" /><path d="M197.77 7.90V0.40" /><path d="M200.82 7.90V5.60" /><path d="M203.86 7.90V5.60" /><path d="M206.90 7.90V5.60" /><path d="M209.94 7.90V5.60" /><path d="M212.98 7.90V4.30" /><path d="M216.02 7.90V5.60" /><path d="M219.06 7.90V5.60" /><path d="M222.10 7.90V5.60" /><path d="M225.14 7.90V5.60" /><path d="M228.19 7.90V0.40" /><path d="M231.23 7.90V5.60" /><path d="M234.27 7.90V5.60" /><path d="M237.31 7.90V5.60" /><path d="M240.35 7.90V5.60" /><path d="M243.39 7.90V4.30" /><path d="M246.43 7.90V5.60" /><path d="M249.47 7.90V5.60" /><path d="M252.52 7.90V5.60" /><path d="M255.56 7.90V5.60" /><path d="M258.60 7.90V0.40" /><path d="M261.64 7.90V5.60" /><path d="M264.68 7.90V5.60" /><path d="M267.72 7.90V5.60" /><path d="M270.76 7.90V5.60" /><path d="M273.80 7.90V4.30" /><path d="M276.85 7.90V5.60" /><path d="M279.89 7.90V5.60" /><path d="M282.93 7.90V5.60" /><path d="M285.97 7.90V5.60" /><path d="M289.01 7.90V0.40" /><path d="M292.05 7.90V5.60" /><path d="M295.09 7.90V5.60" /><path d="M298.13 7.90V5.60" /><path d="M301.17 7.90V5.60" /><path d="M304.22 7.90V4.30" /><path d="M307.26 7.90V5.60" /><path d="M310.30 7.90V5.60" /><path d="M313.34 7.90V5.60" /><path d="M316.38 7.90V5.60" /><path d="M319.42 7.90V0.40" /><path d="M322.46 7.90V5.60" /><path d="M325.50 7.90V5.60" /><path d="M328.55 7.90V5.60" /><path d="M331.59 7.90V5.60" /><path d="M334.63 7.90V4.30" /><path d="M337.67 7.90V5.60" /><path d="M340.71 7.90V5.60" /><path d="M343.75 7.90V5.60" /><path d="M346.79 7.90V5.60" /><path d="M349.83 7.90V0.40" /><path d="M352.88 7.90V5.60" /><path d="M355.92 7.90V5.60" /><path d="M358.96 7.90V5.60" /><path d="M362.00 7.90V5.60" /><path d="M365.04 7.90V4.30" /><path d="M368.08 7.90V5.60" /><path d="M371.12 7.90V5.60" /><path d="M374.16 7.90V5.60" /><path d="M377.20 7.90V5.60" /><path d="M380.25 7.90V0.40" /><path d="M383.29 7.90V5.60" /><path d="M386.33 7.90V5.60" /><path d="M389.37 7.90V5.60" /><path d="M392.41 7.90V5.60" /><path d="M395.45 7.90V4.30" /><path d="M398.49 7.90V5.60" /><path d="M401.53 7.90V5.60" /><path d="M404.58 7.90V5.60" /><path d="M407.62 7.90V5.60" /><path d="M410.66 7.90V0.40" /><path d="M413.70 7.90V5.60" /><path d="M416.74 7.90V5.60" /><path d="M419.78 7.90V5.60" /><path d="M422.82 7.90V5.60" /><path d="M425.86 7.90V4.30" /><path d="M428.91 7.90V5.60" /><path d="M431.95 7.90V5.60" /><path d="M434.99 7.90V5.60" /><path d="M438.03 7.90V5.60" /><path d="M441.07 7.90V0.40" /><path d="M444.11 7.90V5.60" /><path d="M447.15 7.90V5.60" /><path d="M450.19 7.90V5.60" /><path d="M453.23 7.90V5.60" /><path d="M456.28 7.90V4.30" /><path d="M459.32 7.90V5.60" /><path d="M462.36 7.90V5.60" /><path d="M465.40 7.90V5.60" /><path d="M468.44 7.90V5.60" /><path d="M471.48 7.90V0.40" /><path d="M474.52 7.90V5.60" /><path d="M477.56 7.90V5.60" /><path d="M480.61 7.90V5.60" /><path d="M483.65 7.90V5.60" /><path d="M486.69 7.90V4.30" /><path d="M489.73 7.90V5.60" /><path d="M492.77 7.90V5.60" /><path d="M495.81 7.90V5.60" /><path d="M498.85 7.90V5.60" /><path d="M501.89 7.90V0.40" /><path d="M504.94 7.90V5.60" /><path d="M507.98 7.90V5.60" /><path d="M511.02 7.90V5.60" /><path d="M514.06 7.90V5.60" /><path d="M517.10 7.90V4.30" /><path d="M520.14 7.90V5.60" /><path d="M523.18 7.90V5.60" /><path d="M526.22 7.90V5.60" /><path d="M529.26 7.90V5.60" /><path d="M532.31 7.90V0.40" /><path d="M535.35 7.90V5.60" /><path d="M538.39 7.90V5.60" /><path d="M541.43 7.90V5.60" /><path d="M544.47 7.90V5.60" /><path d="M547.51 7.90V4.30" /><path d="M550.55 7.90V5.60" /><path d="M553.59 7.90V5.60" /><path d="M556.64 7.90V5.60" /><path d="M559.68 7.90V5.60" /><path d="M562.72 7.90V0.40" /><path d="M565.76 7.90V5.60" /><path d="M568.80 7.90V5.60" /><path d="M571.84 7.90V5.60" /></g></svg><span class="t" style="left:28.10px;top:91.97px;font-size:4.6px;line-height:5.98px;color:#222;letter-spacing:0.000px;">-80</span><span class="t" style="left:58.51px;top:91.97px;font-size:4.6px;line-height:5.98px;color:#222;letter-spacing:0.000px;">-60</span><span class="t" style="left:88.93px;top:91.97px;font-size:4.6px;line-height:5.98px;color:#222;letter-spacing:0.000px;">-40</span><span class="t" style="left:119.34px;top:91.97px;font-size:4.6px;line-height:5.98px;color:#222;letter-spacing:0.000px;">-20</span><span class="t" style="left:149.75px;top:91.97px;font-size:4.6px;line-height:5.98px;color:#222;letter-spacing:0.000px;">0</span><span class="t" style="left:180.16px;top:91.97px;font-size:4.6px;line-height:5.98px;color:#222;letter-spacing:0.000px;">20</span><span class="t" style="left:210.57px;top:91.97px;font-size:4.6px;line-height:5.98px;color:#222;letter-spacing:0.000px;">40</span><span class="t" style="left:240.99px;top:91.97px;font-size:4.6px;line-height:5.98px;color:#222;letter-spacing:0.000px;">60</span><span class="t" style="left:271.40px;top:91.97px;font-size:4.6px;line-height:5.98px;color:#222;letter-spacing:0.000px;">80</span><span class="t" style="left:301.81px;top:91.97px;font-size:4.6px;line-height:5.98px;color:#222;letter-spacing:0.000px;">100</span><span class="t" style="left:332.22px;top:91.97px;font-size:4.6px;line-height:5.98px;color:#222;letter-spacing:0.000px;">120</span><span class="t" style="left:362.63px;top:91.97px;font-size:4.6px;line-height:5.98px;color:#222;letter-spacing:0.000px;">140</span><span class="t" style="left:393.05px;top:91.97px;font-size:4.6px;line-height:5.98px;color:#222;letter-spacing:0.000px;">160</span><span class="t" style="left:423.46px;top:91.97px;font-size:4.6px;line-height:5.98px;color:#222;letter-spacing:0.000px;">180</span><span class="t" style="left:453.87px;top:91.97px;font-size:4.6px;line-height:5.98px;color:#222;letter-spacing:0.000px;">200</span><span class="t" style="left:484.28px;top:91.97px;font-size:4.6px;line-height:5.98px;color:#222;letter-spacing:0.000px;">220</span><span class="t" style="left:514.69px;top:91.97px;font-size:4.6px;line-height:5.98px;color:#222;letter-spacing:0.000px;">240</span><span class="t" style="left:545.11px;top:91.97px;font-size:4.6px;line-height:5.98px;color:#222;letter-spacing:0.000px;">260</span><span class="t" style="left:575.52px;top:91.97px;font-size:4.6px;line-height:5.98px;color:#222;letter-spacing:0.000px;">280</span>
<div style="left:3px;top:100px;width:8.5px;height:303.5px;background:linear-gradient(to right,#f8f9fc,#edf0f5);border:1px solid #aec2de;"></div><svg style="left:3px;top:100px" width="8.5" height="303.5" viewBox="0 0 8.5 303.5"><g stroke="#3a3f4a" stroke-width=".75" fill="none"><path d="M7.90 3.42H5.60" /><path d="M7.90 6.46H5.60" /><path d="M7.90 9.51H4.30" /><path d="M7.90 12.55H5.60" /><path d="M7.90 15.59H5.60" /><path d="M7.90 18.63H5.60" /><path d="M7.90 21.67H5.60" /><path d="M7.90 24.71H0.40" /><path d="M7.90 27.75H5.60" /><path d="M7.90 30.79H5.60" /><path d="M7.90 33.84H5.60" /><path d="M7.90 36.88H5.60" /><path d="M7.90 39.92H4.30" /><path d="M7.90 42.96H5.60" /><path d="M7.90 46.00H5.60" /><path d="M7.90 49.04H5.60" /><path d="M7.90 52.08H5.60" /><path d="M7.90 55.12H0.40" /><path d="M7.90 58.17H5.60" /><path d="M7.90 61.21H5.60" /><path d="M7.90 64.25H5.60" /><path d="M7.90 67.29H5.60" /><path d="M7.90 70.33H4.30" /><path d="M7.90 73.37H5.60" /><path d="M7.90 76.41H5.60" /><path d="M7.90 79.45H5.60" /><path d="M7.90 82.49H5.60" /><path d="M7.90 85.54H0.40" /><path d="M7.90 88.58H5.60" /><path d="M7.90 91.62H5.60" /><path d="M7.90 94.66H5.60" /><path d="M7.90 97.70H5.60" /><path d="M7.90 100.74H4.30" /><path d="M7.90 103.78H5.60" /><path d="M7.90 106.82H5.60" /><path d="M7.90 109.87H5.60" /><path d="M7.90 112.91H5.60" /><path d="M7.90 115.95H0.40" /><path d="M7.90 118.99H5.60" /><path d="M7.90 122.03H5.60" /><path d="M7.90 125.07H5.60" /><path d="M7.90 128.11H5.60" /><path d="M7.90 131.15H4.30" /><path d="M7.90 134.20H5.60" /><path d="M7.90 137.24H5.60" /><path d="M7.90 140.28H5.60" /><path d="M7.90 143.32H5.60" /><path d="M7.90 146.36H0.40" /><path d="M7.90 149.40H5.60" /><path d="M7.90 152.44H5.60" /><path d="M7.90 155.48H5.60" /><path d="M7.90 158.52H5.60" /><path d="M7.90 161.57H4.30" /><path d="M7.90 164.61H5.60" /><path d="M7.90 167.65H5.60" /><path d="M7.90 170.69H5.60" /><path d="M7.90 173.73H5.60" /><path d="M7.90 176.77H0.40" /><path d="M7.90 179.81H5.60" /><path d="M7.90 182.85H5.60" /><path d="M7.90 185.90H5.60" /><path d="M7.90 188.94H5.60" /><path d="M7.90 191.98H4.30" /><path d="M7.90 195.02H5.60" /><path d="M7.90 198.06H5.60" /><path d="M7.90 201.10H5.60" /><path d="M7.90 204.14H5.60" /><path d="M7.90 207.18H0.40" /><path d="M7.90 210.23H5.60" /><path d="M7.90 213.27H5.60" /><path d="M7.90 216.31H5.60" /><path d="M7.90 219.35H5.60" /><path d="M7.90 222.39H4.30" /><path d="M7.90 225.43H5.60" /><path d="M7.90 228.47H5.60" /><path d="M7.90 231.51H5.60" /><path d="M7.90 234.55H5.60" /><path d="M7.90 237.60H0.40" /><path d="M7.90 240.64H5.60" /><path d="M7.90 243.68H5.60" /><path d="M7.90 246.72H5.60" /><path d="M7.90 249.76H5.60" /><path d="M7.90 252.80H4.30" /><path d="M7.90 255.84H5.60" /><path d="M7.90 258.88H5.60" /><path d="M7.90 261.93H5.60" /><path d="M7.90 264.97H5.60" /><path d="M7.90 268.01H0.40" /><path d="M7.90 271.05H5.60" /><path d="M7.90 274.09H5.60" /><path d="M7.90 277.13H5.60" /><path d="M7.90 280.17H5.60" /><path d="M7.90 283.21H4.30" /><path d="M7.90 286.26H5.60" /><path d="M7.90 289.30H5.60" /><path d="M7.90 292.34H5.60" /><path d="M7.90 295.38H5.60" /><path d="M7.90 298.42H0.40" /><path d="M7.90 301.46H5.60" /></g></svg><span class="t" style="left:3.60px;top:123.91px;font-size:4.600px;line-height:5px;color:#222;transform-origin:0 0;transform:rotate(-90deg);">20</span><span class="t" style="left:3.60px;top:154.32px;font-size:4.600px;line-height:5px;color:#222;transform-origin:0 0;transform:rotate(-90deg);">40</span><span class="t" style="left:3.60px;top:184.74px;font-size:4.600px;line-height:5px;color:#222;transform-origin:0 0;transform:rotate(-90deg);">60</span><span class="t" style="left:3.60px;top:215.15px;font-size:4.600px;line-height:5px;color:#222;transform-origin:0 0;transform:rotate(-90deg);">80</span><span class="t" style="left:3.60px;top:245.56px;font-size:4.600px;line-height:5px;color:#222;transform-origin:0 0;transform:rotate(-90deg);">100</span><span class="t" style="left:3.60px;top:275.97px;font-size:4.600px;line-height:5px;color:#222;transform-origin:0 0;transform:rotate(-90deg);">120</span><span class="t" style="left:3.60px;top:306.38px;font-size:4.600px;line-height:5px;color:#222;transform-origin:0 0;transform:rotate(-90deg);">140</span><span class="t" style="left:3.60px;top:336.80px;font-size:4.600px;line-height:5px;color:#222;transform-origin:0 0;transform:rotate(-90deg);">160</span><span class="t" style="left:3.60px;top:367.21px;font-size:4.600px;line-height:5px;color:#222;transform-origin:0 0;transform:rotate(-90deg);">180</span><span class="t" style="left:3.60px;top:397.62px;font-size:4.600px;line-height:5px;color:#222;transform-origin:0 0;transform:rotate(-90deg);">200</span>
<div style="left:12.5px;top:100px;width:166px;height:303.5px;background:#e4e8ef;border:1px solid #b9c0cd;"></div>
<div style="left:13.5px;top:101px;width:164px;height:11.5px;background:linear-gradient(to bottom,#dce1e9,#e9edf3 60%,#f0f2f6);border-bottom:1px solid #cdd2dc;"></div>
<span class="t" style="left:15.40px;top:103.97px;font-size:6.7px;line-height:8.71px;color:#333a4a;letter-spacing:-0.205px;font-weight:bold;">Libraries</span>
<svg style="left:171px;top:105px" width="4.5" height="4.5" viewBox="0 0 4.5 4.5"><path d="M.5 .5l3.500 3.500M4 .5l-3.500 3.500" stroke="#555c6a" stroke-width=".8"/></svg>
<div style="left:15.5px;top:113px;width:160.5px;height:277.5px;background:linear-gradient(to bottom,#ffffff 0,#f4f6f9 8px,#e6e9ee 15px,#e6e9ee 100%);border:1px solid #c3c9d5;"></div>
<svg style="left:20px;top:117px" width="7" height="7.5" viewBox="0 0 7 7.5"><rect x=".3" y=".3" width="6.400" height="6.900" fill="#555" /><rect x=".8" y=".8" width="1.800" height="5.900" fill="#d83030"/><rect x="2.600" y=".8" width="1.800" height="5.900" fill="#38a838"/><rect x="4.400" y=".8" width="1.800" height="5.900" fill="#3858c8"/></svg>
<svg style="left:30.84px;top:120.2px" width="2.72" height="1.76" viewBox="0 0 3.400 2.200"><path d="M0 0h3.400l-1.700 2.200z" fill="#555"/></svg>
<div style="left:36px;top:116px;width:1px;height:10px;background:#c5cbd6;"></div>
<div style="left:40px;top:115.5px;width:52.5px;height:11.2px;background:#fff;border:1px solid #86c496;box-shadow:0 0 0 .5px #b8dcc0;"></div>
<div style="left:92.5px;top:115.5px;width:6px;height:11.2px;background:#f6f8fb;border:1px solid #d0d6e0;border-left:none;"></div>
<svg style="left:93.94px;top:120.4px" width="2.72" height="1.76" viewBox="0 0 3.400 2.200"><path d="M0 0h3.400l-1.700 2.200z" fill="#444"/></svg>
<svg style="left:102px;top:117px" width="7" height="7" viewBox="0 0 7 7"><rect x=".3" y=".3" width="6.400" height="6.400" rx=".8" fill="#38a848" stroke="#208030" stroke-width=".4"/><path d="M1.500 3.500h3M3.300 1.800l1.700 1.700l-1.700 1.700" fill="none" stroke="#fff" stroke-width=".9"/></svg>
<div style="left:16.5px;top:129.4px;width:158.5px;height:11.2px;background:linear-gradient(to bottom,#e2e5eb 0%,#d9dce3 50%,#d2d6de 100%);border-top:1px solid #f1f3f7;border-bottom:1px solid #b6bbc7;"></div>
<div style="left:18.6px;top:131.8px;width:5.4px;height:6.4px;background:linear-gradient(to right,#a6e878 0%,#ccf6b0 40%,#d6fabc 60%,#b0ec88 100%);border:.8px solid #86d650;border-radius:1px;"></div>
<span class="t" style="left:27.40px;top:131.97px;font-size:6.7px;line-height:8.71px;color:#20263a;letter-spacing:-0.084px;">Garden</span>
<svg style="left:164.5px;top:133px" width="4" height="4" viewBox="0 0 4 4"><path d="M.4 .4l3.200 3.200M3.600 .4l-3.200 3.200" stroke="#b6bcc8" stroke-width=".8"/></svg>
<div style="left:172.6px;top:131.5px;width:1px;height:7px;background:repeating-linear-gradient(to bottom,#aab0bc 0,#aab0bc 1px,transparent 1px,transparent 2px);"></div>
<div style="left:16.5px;top:141.57px;width:158.5px;height:11.2px;background:linear-gradient(to bottom,#e2e5eb 0%,#d9dce3 50%,#d2d6de 100%);border-top:1px solid #f1f3f7;border-bottom:1px solid #b6bbc7;"></div>
<div style="left:18.6px;top:143.97px;width:5.4px;height:6.4px;background:linear-gradient(to right,#a6e878 0%,#ccf6b0 40%,#d6fabc 60%,#b0ec88 100%);border:.8px solid #86d650;border-radius:1px;"></div>
<span class="t" style="left:27.40px;top:143.97px;font-size:6.7px;line-height:8.71px;color:#20263a;letter-spacing:-0.214px;">Plants</span>
<svg style="left:164.5px;top:145.17px" width="4" height="4" viewBox="0 0 4 4"><path d="M.4 .4l3.200 3.200M3.600 .4l-3.200 3.200" stroke="#b6bcc8" stroke-width=".8"/></svg>
<div style="left:172.6px;top:143.67px;width:1px;height:7px;background:repeating-linear-gradient(to bottom,#aab0bc 0,#aab0bc 1px,transparent 1px,transparent 2px);"></div>
<div style="left:16.5px;top:153.74px;width:158.5px;height:11.2px;background:linear-gradient(to bottom,#e2e5eb 0%,#d9dce3 50%,#d2d6de 100%);border-top:1px solid #f1f3f7;border-bottom:1px solid #b6bbc7;"></div>
<div style="left:18.6px;top:156.14px;width:5.4px;height:6.4px;background:linear-gradient(to right,#a6e878 0%,#ccf6b0 40%,#d6fabc 60%,#b0ec88 100%);border:.8px solid #86d650;border-radius:1px;"></div>
<span class="t" style="left:27.40px;top:155.97px;font-size:6.7px;line-height:8.71px;color:#20263a;letter-spacing:-0.090px;">Fire and Emergency</span>
<svg style="left:164.5px;top:157.34px" width="4" height="4" viewBox="0 0 4 4"><path d="M.4 .4l3.200 3.200M3.600 .4l-3.200 3.200" stroke="#b6bcc8" stroke-width=".8"/></svg>
<div style="left:172.6px;top:155.84px;width:1px;height:7px;background:repeating-linear-gradient(to bottom,#aab0bc 0,#aab0bc 1px,transparent 1px,transparent 2px);"></div>
<div style="left:16.5px;top:165.91px;width:158.5px;height:11.2px;background:linear-gradient(to bottom,#e2e5eb 0%,#d9dce3 50%,#d2d6de 100%);border-top:1px solid #f1f3f7;border-bottom:1px solid #b6bbc7;"></div>
<div style="left:18.6px;top:168.31px;width:5.4px;height:6.4px;background:linear-gradient(to right,#a6e878 0%,#ccf6b0 40%,#d6fabc 60%,#b0ec88 100%);border:.8px solid #86d650;border-radius:1px;"></div>
<span class="t" style="left:27.40px;top:167.97px;font-size:6.7px;line-height:8.71px;color:#20263a;letter-spacing:-0.073px;">Office Furniture</span>
<svg style="left:164.5px;top:169.51px" width="4" height="4" viewBox="0 0 4 4"><path d="M.4 .4l3.200 3.200M3.600 .4l-3.200 3.200" stroke="#b6bcc8" stroke-width=".8"/></svg>
<div style="left:172.6px;top:168.01px;width:1px;height:7px;background:repeating-linear-gradient(to bottom,#aab0bc 0,#aab0bc 1px,transparent 1px,transparent 2px);"></div>
<div style="left:16.5px;top:178.08px;width:158.5px;height:11.2px;background:linear-gradient(to bottom,#e2e5eb 0%,#d9dce3 50%,#d2d6de 100%);border-top:1px solid #f1f3f7;border-bottom:1px solid #b6bbc7;"></div>
<div style="left:18.6px;top:180.48px;width:5.4px;height:6.4px;background:linear-gradient(to right,#a6e878 0%,#ccf6b0 40%,#d6fabc 60%,#b0ec88 100%);border:.8px solid #86d650;border-radius:1px;"></div>
<span class="t" style="left:27.40px;top:180.97px;font-size:6.7px;line-height:8.71px;color:#20263a;letter-spacing:-0.175px;">Road Shapes</span>
<svg style="left:164.5px;top:181.68px" width="4" height="4" viewBox="0 0 4 4"><path d="M.4 .4l3.200 3.200M3.600 .4l-3.200 3.200" stroke="#b6bcc8" stroke-width=".8"/></svg>
<div style="left:172.6px;top:180.18px;width:1px;height:7px;background:repeating-linear-gradient(to bottom,#aab0bc 0,#aab0bc 1px,transparent 1px,transparent 2px);"></div>
<div style="left:16.5px;top:190.25px;width:158.5px;height:11.2px;background:linear-gradient(to bottom,#e2e5eb 0%,#d9dce3 50%,#d2d6de 100%);border-top:1px solid #f1f3f7;border-bottom:1px solid #b6bbc7;"></div>
<div style="left:18.6px;top:192.65px;width:5.4px;height:6.4px;background:linear-gradient(to right,#a6e878 0%,#ccf6b0 40%,#d6fabc 60%,#b0ec88 100%);border:.8px solid #86d650;border-radius:1px;"></div>
<span class="t" style="left:27.40px;top:192.97px;font-size:6.7px;line-height:8.71px;color:#20263a;letter-spacing:-0.039px;">Backgrounds</span>
<svg style="left:164.5px;top:193.85px" width="4" height="4" viewBox="0 0 4 4"><path d="M.4 .4l3.200 3.200M3.600 .4l-3.200 3.200" stroke="#b6bcc8" stroke-width=".8"/></svg>
<div style="left:172.6px;top:192.35px;width:1px;height:7px;background:repeating-linear-gradient(to bottom,#aab0bc 0,#aab0bc 1px,transparent 1px,transparent 2px);"></div>
<div style="left:16.5px;top:202.42px;width:158.5px;height:11.2px;background:linear-gradient(to bottom,#e2e5eb 0%,#d9dce3 50%,#d2d6de 100%);border-top:1px solid #f1f3f7;border-bottom:1px solid #b6bbc7;"></div>
<div style="left:18.6px;top:204.82px;width:5.4px;height:6.4px;background:linear-gradient(to right,#a6e878 0%,#ccf6b0 40%,#d6fabc 60%,#b0ec88 100%);border:.8px solid #86d650;border-radius:1px;"></div>
<span class="t" style="left:27.40px;top:204.97px;font-size:6.7px;line-height:8.71px;color:#20263a;letter-spacing:-0.112px;">Appliances</span>
<svg style="left:164.5px;top:206.02px" width="4" height="4" viewBox="0 0 4 4"><path d="M.4 .4l3.200 3.200M3.600 .4l-3.200 3.200" stroke="#b6bcc8" stroke-width=".8"/></svg>
<div style="left:172.6px;top:204.52px;width:1px;height:7px;background:repeating-linear-gradient(to bottom,#aab0bc 0,#aab0bc 1px,transparent 1px,transparent 2px);"></div>
<div style="left:16.5px;top:214.59px;width:158.5px;height:11.2px;background:linear-gradient(to bottom,#e2e5eb 0%,#d9dce3 50%,#d2d6de 100%);border-top:1px solid #f1f3f7;border-bottom:1px solid #b6bbc7;"></div>
<div style="left:18.6px;top:216.99px;width:5.4px;height:6.4px;background:linear-gradient(to right,#a6e878 0%,#ccf6b0 40%,#d6fabc 60%,#b0ec88 100%);border:.8px solid #86d650;border-radius:1px;"></div>
<span class="t" style="left:27.40px;top:216.97px;font-size:6.7px;line-height:8.71px;color:#20263a;letter-spacing:-0.032px;">Kitchen and Dining Room</span>
<svg style="left:164.5px;top:218.19px" width="4" height="4" viewBox="0 0 4 4"><path d="M.4 .4l3.200 3.200M3.600 .4l-3.200 3.200" stroke="#b6bcc8" stroke-width=".8"/></svg>
<div style="left:172.6px;top:216.69px;width:1px;height:7px;background:repeating-linear-gradient(to bottom,#aab0bc 0,#aab0bc 1px,transparent 1px,transparent 2px);"></div>
<div style="left:16.5px;top:226.76px;width:158.5px;height:11.2px;background:linear-gradient(to bottom,#e2e5eb 0%,#d9dce3 50%,#d2d6de 100%);border-top:1px solid #f1f3f7;border-bottom:1px solid #b6bbc7;"></div>
<div style="left:18.6px;top:229.16px;width:5.4px;height:6.4px;background:linear-gradient(to right,#a6e878 0%,#ccf6b0 40%,#d6fabc 60%,#b0ec88 100%);border:.8px solid #86d650;border-radius:1px;"></div>
<span class="t" style="left:27.40px;top:228.97px;font-size:6.7px;line-height:8.71px;color:#20263a;letter-spacing:-0.078px;">Wall, Shell and Structure</span>
<svg style="left:164.5px;top:230.36px" width="4" height="4" viewBox="0 0 4 4"><path d="M.4 .4l3.200 3.200M3.600 .4l-3.200 3.200" stroke="#b6bcc8" stroke-width=".8"/></svg>
<div style="left:172.6px;top:228.86px;width:1px;height:7px;background:repeating-linear-gradient(to bottom,#aab0bc 0,#aab0bc 1px,transparent 1px,transparent 2px);"></div>
<div style="left:16.5px;top:238.93px;width:158.5px;height:11.2px;background:linear-gradient(to bottom,#e2e5eb 0%,#d9dce3 50%,#d2d6de 100%);border-top:1px solid #f1f3f7;border-bottom:1px solid #b6bbc7;"></div>
<div style="left:18.6px;top:241.33px;width:5.4px;height:6.4px;background:linear-gradient(to right,#a6e878 0%,#ccf6b0 40%,#d6fabc 60%,#b0ec88 100%);border:.8px solid #86d650;border-radius:1px;"></div>
<span class="t" style="left:27.40px;top:240.97px;font-size:6.7px;line-height:8.71px;color:#20263a;letter-spacing:-0.175px;">Elevations</span>
<svg style="left:164.5px;top:242.53px" width="4" height="4" viewBox="0 0 4 4"><path d="M.4 .4l3.200 3.200M3.600 .4l-3.200 3.200" stroke="#b6bcc8" stroke-width=".8"/></svg>
<div style="left:172.6px;top:241.03px;width:1px;height:7px;background:repeating-linear-gradient(to bottom,#aab0bc 0,#aab0bc 1px,transparent 1px,transparent 2px);"></div>
<div style="left:16.5px;top:251px;width:158.5px;height:139px;background:#e9ecf1;border-top:1px solid #c3c9d5;"></div>
<div style="left:19.6px;top:252.6px;width:31.5px;height:31.2px;background:linear-gradient(135deg,#f7fafe 0%,#e9f1fb 45%,#d3e3f5 100%);border:1px solid #a9bedb;box-shadow:inset .7px .7px 0 rgba(255,255,255,.9);"></div>
<div style="left:57.5px;top:252.6px;width:31.5px;height:31.2px;background:linear-gradient(135deg,#f7fafe 0%,#e9f1fb 45%,#d3e3f5 100%);border:1px solid #a9bedb;box-shadow:inset .7px .7px 0 rgba(255,255,255,.9);"></div>
<div style="left:95.5px;top:252.6px;width:31.5px;height:31.2px;background:linear-gradient(135deg,#f7fafe 0%,#e9f1fb 45%,#d3e3f5 100%);border:1px solid #a9bedb;box-shadow:inset .7px .7px 0 rgba(255,255,255,.9);"></div>
<div style="left:19.6px;top:303.6px;width:31.5px;height:31.2px;background:linear-gradient(135deg,#f7fafe 0%,#e9f1fb 45%,#d3e3f5 100%);border:1px solid #a9bedb;box-shadow:inset .7px .7px 0 rgba(255,255,255,.9);"></div>
<div style="left:57.5px;top:303.6px;width:31.5px;height:31.2px;background:linear-gradient(135deg,#f7fafe 0%,#e9f1fb 45%,#d3e3f5 100%);border:1px solid #a9bedb;box-shadow:inset .7px .7px 0 rgba(255,255,255,.9);"></div>
<div style="left:95.5px;top:303.6px;width:31.5px;height:31.2px;background:linear-gradient(135deg,#f7fafe 0%,#e9f1fb 45%,#d3e3f5 100%);border:1px solid #a9bedb;box-shadow:inset .7px .7px 0 rgba(255,255,255,.9);"></div>
<div style="left:19.6px;top:355.3px;width:31.5px;height:31.2px;background:linear-gradient(135deg,#f7fafe 0%,#e9f1fb 45%,#d3e3f5 100%);border:1px solid #a9bedb;box-shadow:inset .7px .7px 0 rgba(255,255,255,.9);"></div>
<div style="left:57.5px;top:355.3px;width:31.5px;height:31.2px;background:linear-gradient(135deg,#f7fafe 0%,#e9f1fb 45%,#d3e3f5 100%);border:1px solid #a9bedb;box-shadow:inset .7px .7px 0 rgba(255,255,255,.9);"></div>
<div style="left:95.5px;top:355.3px;width:31.5px;height:31.2px;background:linear-gradient(135deg,#f7fafe 0%,#e9f1fb 45%,#d3e3f5 100%);border:1px solid #a9bedb;box-shadow:inset .7px .7px 0 rgba(255,255,255,.9);"></div>
<svg style="left:19.6px;top:252.6px" width="31.5" height="31.2" viewBox="0 0 31.5 31.2"><rect x="2.800" y="6.300" width="25.500" height="17.800" fill="#fff" stroke="#555" stroke-width="1.600"/><rect x="2.800" y="6.300" width="25.500" height="17.800" fill="none" stroke="#999" stroke-width=".4"/></svg>
<svg style="left:57.5px;top:252.6px" width="31.5" height="31.2" viewBox="0 0 31.5 31.2"><rect x="7.800" y="1.800" width="16.500" height="27.500" fill="#fff" stroke="#555" stroke-width="1"/></svg>
<svg style="left:95.5px;top:252.6px" width="31.5" height="31.2" viewBox="0 0 31.5 31.2"><rect x="14.700" y="2.500" width="2.200" height="26" fill="#888" stroke="#666" stroke-width=".4"/></svg>
<svg style="left:19.6px;top:303.6px" width="31.5" height="31.2" viewBox="0 0 31.5 31.2"><rect x="2.500" y="14.700" width="26.500" height="1.800" fill="#888" stroke="#777" stroke-width=".3"/></svg>
<svg style="left:57.5px;top:303.6px" width="31.5" height="31.2" viewBox="0 0 31.5 31.2"><rect x="14.800" y="2.500" width="2.100" height="26.500" rx=".8" fill="#aaa" stroke="#555" stroke-width=".55"/></svg>
<svg style="left:95.5px;top:303.6px" width="31.5" height="31.2" viewBox="0 0 31.5 31.2"><rect x="2.800" y="14.900" width="26" height="2" rx=".8" fill="#888" stroke="#555" stroke-width=".55"/></svg>
<svg style="left:19.6px;top:355.3px" width="31.5" height="31.2" viewBox="0 0 31.5 31.2"><rect x="2.500" y="15.200" width="26.500" height="1.600" fill="#333"/></svg>
<svg style="left:57.5px;top:355.3px" width="31.5" height="31.2" viewBox="0 0 31.5 31.2"><rect x="2.800" y="11" width="26" height="9.500" fill="#fff" stroke="#555" stroke-width=".8"/><rect x="12.500" y="15" width="6.500" height="1.800" rx=".6" fill="#222"/></svg>
<svg style="left:95.5px;top:355.3px" width="31.5" height="31.2" viewBox="0 0 31.5 31.2"><rect x="2.800" y="11" width="26" height="9.500" fill="#fff" stroke="#555" stroke-width=".8"/><path d="M13 14h6l-1 2h-4z" fill="#222"/></svg>
<span class="t" style="left:28.00px;top:286.98px;font-size:6.5px;line-height:8.45px;color:#30439a;letter-spacing:-0.156px;">Frame</span>
<span class="t" style="left:63.40px;top:286.98px;font-size:6.5px;line-height:8.45px;color:#30439a;letter-spacing:-0.171px;">Frame 2</span>
<span class="t" style="left:97.00px;top:286.98px;font-size:6.5px;line-height:8.45px;color:#30439a;letter-spacing:0.118px;">Divider - H</span>
<span class="t" style="left:21.60px;top:337.98px;font-size:6.5px;line-height:8.45px;color:#30439a;letter-spacing:0.042px;">Divider - V</span>
<span class="t" style="left:59.00px;top:337.98px;font-size:6.5px;line-height:8.45px;color:#30439a;letter-spacing:0.118px;">Divider - H</span>
<span class="t" style="left:97.60px;top:337.98px;font-size:6.5px;line-height:8.45px;color:#30439a;letter-spacing:0.096px;">Divider - V</span>
<span class="t" style="left:71.80px;top:346.98px;font-size:6.5px;line-height:8.45px;color:#30439a;letter-spacing:0.000px;">2</span>
<span class="t" style="left:110.60px;top:346.98px;font-size:6.5px;line-height:8.45px;color:#30439a;letter-spacing:0.000px;">2</span>
<div style="left:166px;top:252px;width:8.5px;height:138px;background:#f0f1f4;"></div>
<svg style="left:168.8px;top:254.5px" width="3.4" height="2.2" viewBox="0 0 3.4 2.2"><path d="M0 2.200h3.400l-1.700-2.200z" fill="#444"/></svg>
<div style="left:166.8px;top:260.4px;width:7.4px;height:14.2px;border:1px solid #a9b0bd;border-radius:1.500px;background:linear-gradient(to right,#f4f5f8,#dfe2e8 50%,#cfd3db);"></div>
<div style="left:168.8px;top:265.5px;width:3.4px;height:4px;background:repeating-linear-gradient(to bottom,#7a8290 0,#7a8290 .7px,transparent .7px,transparent 1.400px);"></div>
<svg style="left:168.97px;top:382.9px" width="3.06" height="1.98" viewBox="0 0 3.400 2.200"><path d="M0 0h3.400l-1.700 2.200z" fill="#444"/></svg>
<div style="left:175.2px;top:113px;width:1.8px;height:290px;background:#f8f9fb;"></div>
<div style="left:177px;top:100px;width:1.7px;height:303.5px;background:linear-gradient(to right,#cfd3da,#b0b5bf);"></div>
<div style="left:15.5px;top:390.5px;width:160.5px;height:12px;background:#e8ebf1;border-top:1px solid #c3c9d5;"></div>
<div style="left:15.8px;top:390.5px;width:38.5px;height:11px;background:#fbfcfe;border:1px solid #c3c9d5;border-top:none;border-radius:0 0 1.500px 1.500px;"></div>
<svg style="left:18px;top:392.5px" width="7" height="8" viewBox="0 0 7 8"><path d="M1 1.500l3-1l2.500 1v5.500l-2.500 1l-3-1z" fill="#e8b848" stroke="#b88818" stroke-width=".4"/><rect x="2" y="4" width="1.600" height="2.800" fill="#e05050"/><rect x="3.800" y="3.600" width="1.600" height="3.200" fill="#50a050"/><rect x="4.800" y="2" width="1.200" height="4" fill="#4878d0"/></svg>
<span class="t" style="left:26.40px;top:393.98px;font-size:6.7px;line-height:8.71px;color:#333a4a;letter-spacing:-0.116px;">Libraries</span>
<svg style="left:58.5px;top:392px" width="6.5" height="8.5" viewBox="0 0 6.5 8.5"><path d="M.8 .5h3.500l1.700 1.700v5.800h-5.200z" fill="#f6f8fc" stroke="#8a98b4" stroke-width=".6"/><path d="M1.800 3.500h3M1.800 5h3M1.800 6.400h2" stroke="#a8b4cc" stroke-width=".5"/></svg>
<span class="t" style="left:66.80px;top:393.98px;font-size:6.7px;line-height:8.71px;color:#333a4a;letter-spacing:-0.206px;">File Recovery</span>
<div style="left:178.8px;top:100px;width:398.7px;height:304px;background:#fff;"></div>
<svg style="left:0;top:0" width="600" height="439" viewBox="0 0 600 439"><rect x="205.200" y="118.400" width="345.100" height="5.800" fill="#c9d7cf" stroke="#555" stroke-width=".6"/><rect x="205.200" y="187.400" width="345.100" height="6.600" fill="#c9d7cf" stroke="#555" stroke-width=".6"/><rect x="205.20" y="124.300" width="43.13" height="63.100" fill="#707070" stroke="#333" stroke-width=".7"/><rect x="248.33" y="124.300" width="43.13" height="63.100" fill="#707070" stroke="#333" stroke-width=".7"/><rect x="291.46" y="124.300" width="43.13" height="63.100" fill="#d6081e" stroke="#4a0810" stroke-width=".7"/><rect x="334.59" y="124.300" width="43.13" height="63.100" fill="#d6081e" stroke="#4a0810" stroke-width=".7"/><rect x="377.72" y="124.300" width="43.13" height="63.100" fill="#707070" stroke="#333" stroke-width=".7"/><rect x="420.85" y="124.300" width="43.13" height="63.100" fill="#707070" stroke="#333" stroke-width=".7"/><rect x="463.98" y="124.300" width="43.13" height="63.100" fill="#d6081e" stroke="#4a0810" stroke-width=".7"/><rect x="507.11" y="124.300" width="43.13" height="63.100" fill="#d6081e" stroke="#4a0810" stroke-width=".7"/><rect x="240.68" y="149.300" width="3.300" height="14.200" rx="1.650" fill="#fff" stroke="#2a2a2a" stroke-width=".75"/><rect x="252.68" y="149.300" width="3.300" height="14.200" rx="1.650" fill="#fff" stroke="#2a2a2a" stroke-width=".75"/><rect x="326.94" y="149.300" width="3.300" height="14.200" rx="1.650" fill="#fff" stroke="#2a2a2a" stroke-width=".75"/><rect x="338.94" y="149.300" width="3.300" height="14.200" rx="1.650" fill="#fff" stroke="#2a2a2a" stroke-width=".75"/><rect x="413.20" y="149.300" width="3.300" height="14.200" rx="1.650" fill="#fff" stroke="#2a2a2a" stroke-width=".75"/><rect x="425.20" y="149.300" width="3.300" height="14.200" rx="1.650" fill="#fff" stroke="#2a2a2a" stroke-width=".75"/><rect x="499.46" y="149.300" width="3.300" height="14.200" rx="1.650" fill="#fff" stroke="#2a2a2a" stroke-width=".75"/><rect x="511.46" y="149.300" width="3.300" height="14.200" rx="1.650" fill="#fff" stroke="#2a2a2a" stroke-width=".75"/><path d="M377 194.200H465.700L460.200 238.200H383.800z" fill="#2c2828" stroke="#141212" stroke-width=".5"/><path d="M377.500 199.800H397l1.200-2h46.600l1.200 2H465" fill="none" stroke="#4a4545" stroke-width=".5"/><path d="M385.500 202.500Q384.300 202.500 384.500 204L388 231.500Q388.200 233 389.500 233H451Q452.300 233 452.500 231.500L456 204Q456.200 202.500 455 202.500z" fill="#242020" stroke="#4a4545" stroke-width=".5"/><path d="M388.5 205.500L391.0 231M390.6 205.500L392.9 231M392.6 205.500L394.8 231M394.7 205.500L396.7 231M396.7 205.500L398.5 231M398.8 205.500L400.4 231M400.8 205.500L402.3 231M402.9 205.500L404.2 231M404.9 205.500L406.1 231M407.0 205.500L408.0 231M409.0 205.500L409.9 231M411.1 205.500L411.8 231M413.1 205.500L413.7 231M415.2 205.500L415.6 231M417.2 205.500L417.4 231M419.3 205.500L419.3 231M421.3 205.500L421.2 231M423.4 205.500L423.1 231M425.4 205.500L425.0 231M427.5 205.500L426.9 231M429.5 205.500L428.8 231M431.6 205.500L430.7 231M433.6 205.500L432.6 231M435.7 205.500L434.5 231M437.7 205.500L436.3 231M439.8 205.500L438.2 231M441.8 205.500L440.1 231M443.9 205.500L442.0 231M445.9 205.500L443.9 231M448.0 205.500L445.8 231M450.0 205.500L447.7 231M452.1 205.500L449.6 231" stroke="#5a5454" stroke-width=".7"/><path d="M410.700 203L411.300 233M432.400 203L431.800 233" stroke="#1c1919" stroke-width="1.500"/><path d="M387 204.800H453.500" stroke="#3e3a3a" stroke-width=".8"/><circle cx="416.8" cy="197.400" r="1.050" fill="#2c2828" stroke="#8a8484" stroke-width=".45"/><circle cx="420.1" cy="197.400" r="1.050" fill="#2c2828" stroke="#8a8484" stroke-width=".45"/><circle cx="423.4" cy="197.400" r="1.050" fill="#2c2828" stroke="#8a8484" stroke-width=".45"/><circle cx="426.7" cy="197.400" r="1.050" fill="#2c2828" stroke="#8a8484" stroke-width=".45"/><circle cx="398.700" cy="205.600" r=".8" fill="#141212"/><rect x="490.300" y="200.700" width="48" height="4.600" rx="2.300" fill="#b5d93c" stroke="#7a9a20" stroke-width=".5"/><path d="M497.2 214.500V229" stroke="#6a6a6a" stroke-width="1.300"/><path d="M497.2 214.500V229" stroke="#e8e8e8" stroke-width=".4"/><rect x="496" y="202.300" width="2.400" height="12.700" rx="1" fill="#f0a020" stroke="#a86408" stroke-width=".45"/><circle cx="497.2" cy="202.600" r=".9" fill="#4a4a4a"/><path d="M497.2 227.300c-2.500 2-6.500 5.500-6.300 9.500c.3 4 12.300 4 12.600 0c.2-4-3.800-7.500-6.300-9.500z" fill="#fefefe" stroke="#555" stroke-width=".7"/><path d="M513.6 214.500V229" stroke="#6a6a6a" stroke-width="1.300"/><path d="M513.6 214.500V229" stroke="#e8e8e8" stroke-width=".4"/><rect x="512.4" y="202.300" width="2.400" height="12.700" rx="1" fill="#f0a020" stroke="#a86408" stroke-width=".45"/><circle cx="513.6" cy="202.600" r=".9" fill="#4a4a4a"/><path d="M513.6 225.500l-4.900 5.200v8.300q0 1 1 1h7.800q1 0 1-1v-8.300z" fill="#f6f6f6" stroke="#555" stroke-width=".7"/><path d="M510.9 231.500v6.500M512.7 231.500v6.500M514.5 231.500v6.500M516.3 231.500v6.500" stroke="#777" stroke-width=".7"/><path d="M530.4 214.500V229" stroke="#6a6a6a" stroke-width="1.300"/><path d="M530.4 214.500V229" stroke="#e8e8e8" stroke-width=".4"/><rect x="529.2" y="202.300" width="2.400" height="12.700" rx="1" fill="#f0a020" stroke="#a86408" stroke-width=".45"/><circle cx="530.4" cy="202.600" r=".9" fill="#4a4a4a"/><ellipse cx="530.4" cy="234.400" rx="5.600" ry="6" fill="#fefefe" stroke="#555" stroke-width=".7"/><rect x="205.200" y="293.200" width="345.100" height="2.300" fill="#c40a1c" stroke="#3a0a10" stroke-width=".6"/><rect x="205.200" y="295.500" width="79" height="85.700" fill="#d6081e" stroke="#2a0508" stroke-width=".8"/><rect x="284.200" y="295.500" width="79.300" height="85.700" fill="#d6081e" stroke="#2a0508" stroke-width=".8"/><rect x="471.700" y="295.500" width="78.600" height="85.700" fill="#d6081e" stroke="#2a0508" stroke-width=".8"/><rect x="205.200" y="381.200" width="345.100" height="5.500" fill="#c9d7cf" stroke="#444" stroke-width=".6"/><rect x="277.25" y="327.200" width="2.700" height="22" rx="1.350" fill="#f0f0f0" stroke="#2a2a2a" stroke-width=".75"/><rect x="289.05" y="327.200" width="2.700" height="22" rx="1.350" fill="#f0f0f0" stroke="#2a2a2a" stroke-width=".75"/><rect x="478.65" y="327.200" width="2.700" height="22" rx="1.350" fill="#f0f0f0" stroke="#2a2a2a" stroke-width=".75"/><rect x="363.500" y="295.500" width="108.200" height="85.700" fill="#707070" stroke="#2a2a2a" stroke-width=".7"/><path d="M363.500 296H471.700" stroke="#4a1a1e" stroke-width=".8"/><path d="M363.500 299.200H471.700M363.500 311.200H471.700M363.500 343.300H471.700" stroke="#3a3a3a" stroke-width=".7"/><rect x="381.400" y="302.600" width="32.300" height="6.500" fill="#1478d0" stroke="#0a3c78" stroke-width=".5"/><circle cx="425" cy="305.800" r="2.800" fill="#e01020" stroke="#5a0810" stroke-width=".5"/><circle cx="433.6" cy="305.800" r="2.800" fill="#e01020" stroke="#5a0810" stroke-width=".5"/><circle cx="442.5" cy="305.800" r="2.800" fill="#e01020" stroke="#5a0810" stroke-width=".5"/><circle cx="451.5" cy="305.800" r="2.800" fill="#e01020" stroke="#5a0810" stroke-width=".5"/><path d="M408.700 343.300l1.300-1.800h15.400l1.300 1.800z" fill="#5a5a5a" stroke="#333" stroke-width=".5"/><path d="M408.700 381l1.300-1.800h15.400l1.300 1.800z" fill="#5a5a5a" stroke="#333" stroke-width=".5"/><path d="M239.1 279.800h10.400v11.800q0 1.300-1.300 1.300h-7.800q-1.300 0-1.300-1.300z" fill="#1a78c8" stroke="#0c2c60" stroke-width=".55"/><path d="M254.8 279.800h10.400v11.800q0 1.300-1.300 1.300h-7.800q-1.300 0-1.300-1.300z" fill="#1a78c8" stroke="#0c2c60" stroke-width=".55"/><path d="M291.500 255.200H296.200L298.200 256.300L304.600 277.600L301.900 279.200L295.700 258.600H291.500z" fill="#1a78c8" stroke="#0c2c60" stroke-width=".55"/><path d="M276.500 261.500H291.800L293 290.300Q293 292.800 290.800 292.800H276.900Q274.700 292.800 274.700 290.300z" fill="#1a78c8" stroke="#0c2c60" stroke-width=".55"/><path d="M277 251.800H290.500L291.800 253V261.500H276.500V257.600L272.900 257.400L276 254.200z" fill="#1a78c8" stroke="#0c2c60" stroke-width=".55"/><path d="M276.500 254.500H291.800M279 254.500v4h10v-4M282 254.500v2.500h4v-2.500M279 258.500l-2.500 1.500M289 258.500l2.500 1.500M284 257v4.500" fill="none" stroke="#0c2c60" stroke-width=".45"/><path d="M290.500 253.200L296.500 252.300" stroke="#0c2c60" stroke-width=".8"/><rect x="376" y="290" width="83.200" height="3.100" fill="#fbfbfb" stroke="#8a8a8a" stroke-width=".5"/><path d="M382.4 290l1.800-3.400h19l1.800 3.400z" fill="#fdfdfd" stroke="#777" stroke-width=".55"/><path d="M385.4 288.400h4.500M397.4 288.400h4.500M393.7 286.600v3.400" fill="none" stroke="#666" stroke-width=".5"/><path d="M429.2 290l1.800-3.400h19l1.800 3.400z" fill="#fdfdfd" stroke="#777" stroke-width=".55"/><path d="M432.2 288.400h4.500M444.2 288.400h4.500M440.5 286.600v3.400" fill="none" stroke="#666" stroke-width=".5"/><path d="M411.500 289.300h3.500M417.500 289.300h3.500M423 289.300h2" stroke="#888" stroke-width="1"/><path d="M376.800 278.400L370.600 278.900" stroke="#8a5808" stroke-width="2.300" stroke-linecap="round"/><path d="M410.800 278.400L418 278.700" stroke="#8a5808" stroke-width="2.300" stroke-linecap="round"/><path d="M376.800 278.400L370.600 278.900M410.800 278.400L418 278.700" stroke="#f8a818" stroke-width="1.300" stroke-linecap="round"/><path d="M376.400 277H411C410 283 403 285.800 393.700 285.800C384.400 285.800 377.400 283 376.400 277z" fill="#f8a818" stroke="#6a4408" stroke-width=".6"/><path d="M378.300 277C380 271.500 387 269.300 394 269.300C401 269.300 408.500 271.500 410.200 277z" fill="#fbb024" stroke="#6a4408" stroke-width=".6"/><path d="M376.400 277H411" stroke="#4a3004" stroke-width=".65"/><path d="M392.300 269.500L391.800 267.800C390.300 267.300 390.800 265.300 394 265.300C397.200 265.300 397.700 267.300 396.200 267.800L395.700 269.500z" fill="#fbb024" stroke="#6a4408" stroke-width=".55"/><path d="M391.800 267h4.400" stroke="#fde8b0" stroke-width=".6"/><path d="M431.300 268.500A10.600 13.600 0 0 1 452.700 268.500" fill="none" stroke="#4a6a10" stroke-width="2.700"/><path d="M431.300 268.500A10.600 13.600 0 0 1 452.700 268.500" fill="none" stroke="#b0d844" stroke-width="1.600"/><path d="M429 276.500L423.300 267.800L426 264.600L431.800 270.500z" fill="#a9d13c" stroke="#4a6a10" stroke-width=".6"/><path d="M422.600 266.300L425.800 263.200" stroke="#4a6a10" stroke-width="1.600" stroke-linecap="round"/><path d="M422.600 266.300L425.800 263.200" stroke="#a9d13c" stroke-width=".7" stroke-linecap="round"/><path d="M426.200 283C424.500 272.500 431 266.500 441.100 266.500C451.200 266.500 457.800 272.500 456.200 283L455.300 286.300H427.100z" fill="#a9d13c" stroke="#4a6a10" stroke-width=".6"/><path d="M426.200 282.800H456.200" stroke="#4a6a10" stroke-width=".5"/><path d="M438.800 266.500c0-1.200.8-1.200.8-2.200a1.500 1.500 0 1 1 2.400 0c0 1 .8 1 .8 2.200z" fill="#a9d13c" stroke="#4a6a10" stroke-width=".5"/></svg>
<div style="left:577.5px;top:100px;width:9.5px;height:304px;background:#f1f2f5;border-left:1px solid #dfe2e8;"></div>
<svg style="left:580.3px;top:103.5px" width="3.4" height="2.2" viewBox="0 0 3.4 2.2"><path d="M0 2.200h3.400l-1.700-2.200z" fill="#444"/></svg>
<div style="left:578.5px;top:199px;width:8px;height:103px;border:1px solid #a9b0bd;border-radius:1.500px;background:linear-gradient(to right,#f6f7f9,#e3e6eb 50%,#d2d6de);"></div>
<div style="left:580.8px;top:248.5px;width:3.4px;height:4px;background:repeating-linear-gradient(to bottom,#7a8290 0,#7a8290 .7px,transparent .7px,transparent 1.400px);"></div>
<svg style="left:580.47px;top:399.1px" width="3.06" height="1.98" viewBox="0 0 3.400 2.200"><path d="M0 0h3.400l-1.700 2.200z" fill="#444"/></svg>
<div style="left:2.5px;top:404px;width:585px;height:9px;background:#e6e9f0;border-top:1px solid #c9cfda;"></div>
<div style="left:3px;top:404px;width:9px;height:9px;background:#eef1f6;"></div>
<div style="left:11.3px;top:405px;width:7.6px;height:7.6px;background:linear-gradient(to bottom,#f6f8fb,#e6e9f0);border:1px solid #d3d8e2;"></div>
<svg style="left:12.3px;top:406.3px" width="5.5" height="5" viewBox="0 0 5.5 5"><path d="M1 .5v4" stroke="#333" stroke-width=".8"/><path d="M4.500 .5v4l-2.800-2z" fill="#333"/></svg>
<div style="left:19.8px;top:405px;width:7.6px;height:7.6px;background:linear-gradient(to bottom,#f6f8fb,#e6e9f0);border:1px solid #d3d8e2;"></div>
<svg style="left:20.8px;top:406.3px" width="5.5" height="5" viewBox="0 0 5.5 5"><path d="M4 .5v4l-2.800-2z" fill="#333"/></svg>
<div style="left:28.3px;top:405px;width:7.6px;height:7.6px;background:linear-gradient(to bottom,#f6f8fb,#e6e9f0);border:1px solid #d3d8e2;"></div>
<svg style="left:29.3px;top:406.3px" width="5.5" height="5" viewBox="0 0 5.5 5"><path d="M1.500 .5v4l2.800-2z" fill="#333"/></svg>
<div style="left:36.8px;top:405px;width:7.6px;height:7.6px;background:linear-gradient(to bottom,#f6f8fb,#e6e9f0);border:1px solid #d3d8e2;"></div>
<svg style="left:37.8px;top:406.3px" width="5.5" height="5" viewBox="0 0 5.5 5"><path d="M4.500 .5v4" stroke="#333" stroke-width=".8"/><path d="M1 .5v4l2.800-2z" fill="#333"/></svg>
<svg style="left:46px;top:404px" width="36" height="9.5" viewBox="0 0 36 9.5"><path d="M.5 .3 V8.500 H25 L31.500 .3" fill="#fff" stroke="#b9c0cd" stroke-width=".6"/></svg>
<span class="t" style="left:51.00px;top:404.98px;font-size:6.3px;line-height:8.19px;color:#222;letter-spacing:0.303px;font-weight:bold;font-family:'Liberation Serif', serif;">Page-1</span>
<div style="left:305px;top:404.5px;width:273px;height:8.5px;background:#f1f2f5;border-left:1px solid #c9cfda;"></div>
<svg style="left:309px;top:407.3px" width="2.5" height="3.4" viewBox="0 0 2.5 3.4"><path d="M2.200 0v3.400l-2.200-1.700z" fill="#444"/></svg>
<div style="left:347.7px;top:405px;width:149.5px;height:7.6px;border:1px solid #a9b0bd;border-radius:1.500px;background:linear-gradient(to bottom,#f6f7f9,#e3e6eb 50%,#d2d6de);"></div>
<div style="left:420px;top:407px;width:4px;height:3.4px;background:repeating-linear-gradient(to right,#7a8290 0,#7a8290 .7px,transparent .7px,transparent 1.400px);"></div>
<svg style="left:571.5px;top:407.3px" width="2.5" height="3.4" viewBox="0 0 2.5 3.4"><path d="M0 0v3.400l2.200-1.700z" fill="#444"/></svg>
<div style="left:578px;top:404.5px;width:8.5px;height:8.5px;background:#dce4ef;"></div>
<div style="left:2.5px;top:413px;width:585px;height:11.8px;background:#fbfcfe;border-top:1px solid #b4c6e0;border-bottom:1px solid #b4c6e0;"></div>
<svg style="left:4px;top:414.800px" width="578" height="8" viewBox="0 0 578 8"><rect x="0.00" y="0" width="7.300" height="7.900" fill="#b00018"/><rect x="8.12" y="0" width="7.300" height="7.900" fill="#d6081c"/><rect x="16.25" y="0" width="7.300" height="7.900" fill="#c0486c"/><rect x="24.37" y="0" width="7.300" height="7.900" fill="#e84858"/><rect x="32.49" y="0" width="7.300" height="7.900" fill="#e86060"/><rect x="40.61" y="0" width="7.300" height="7.900" fill="#e85898"/><rect x="48.74" y="0" width="7.300" height="7.900" fill="#e090b0"/><rect x="56.86" y="0" width="7.300" height="7.900" fill="#f08880"/><rect x="64.98" y="0" width="7.300" height="7.900" fill="#f08898"/><rect x="73.11" y="0" width="7.300" height="7.900" fill="#ffa070"/><rect x="81.23" y="0" width="7.300" height="7.900" fill="#f0a888"/><rect x="89.35" y="0" width="7.300" height="7.900" fill="#f8b8b0"/><rect x="97.48" y="0" width="7.300" height="7.900" fill="#ecd8e8"/><rect x="105.60" y="0" width="7.300" height="7.900" fill="#ffd4dc"/><rect x="113.72" y="0" width="7.300" height="7.900" fill="#ffe0e0"/><rect x="121.84" y="0" width="7.300" height="7.900" fill="#102050"/><rect x="129.97" y="0" width="7.300" height="7.900" fill="#203870"/><rect x="138.09" y="0" width="7.300" height="7.900" fill="#402878"/><rect x="146.21" y="0" width="7.300" height="7.900" fill="#084890"/><rect x="154.34" y="0" width="7.300" height="7.900" fill="#0868a8"/><rect x="162.46" y="0" width="7.300" height="7.900" fill="#4060b0"/><rect x="170.58" y="0" width="7.300" height="7.900" fill="#5080c8"/><rect x="178.71" y="0" width="7.300" height="7.900" fill="#0878c8"/><rect x="186.83" y="0" width="7.300" height="7.900" fill="#0888c8"/><rect x="194.95" y="0" width="7.300" height="7.900" fill="#28a0d8"/><rect x="203.07" y="0" width="7.300" height="7.900" fill="#10b0f0"/><rect x="211.20" y="0" width="7.300" height="7.900" fill="#38c0f8"/><rect x="219.32" y="0" width="7.300" height="7.900" fill="#88c0e8"/><rect x="227.44" y="0" width="7.300" height="7.900" fill="#98d4f0"/><rect x="235.57" y="0" width="7.300" height="7.900" fill="#d0ecf8"/><rect x="243.69" y="0" width="7.300" height="7.900" fill="#0c4830"/><rect x="251.81" y="0" width="7.300" height="7.900" fill="#0c6030"/><rect x="259.94" y="0" width="7.300" height="7.900" fill="#106860"/><rect x="268.06" y="0" width="7.300" height="7.900" fill="#687830"/><rect x="276.18" y="0" width="7.300" height="7.900" fill="#088048"/><rect x="284.30" y="0" width="7.300" height="7.900" fill="#209840"/><rect x="292.43" y="0" width="7.300" height="7.900" fill="#10a8a0"/><rect x="300.55" y="0" width="7.300" height="7.900" fill="#50b8c0"/><rect x="308.67" y="0" width="7.300" height="7.900" fill="#20c8b0"/><rect x="316.80" y="0" width="7.300" height="7.900" fill="#48b880"/><rect x="324.92" y="0" width="7.300" height="7.900" fill="#10b050"/><rect x="333.04" y="0" width="7.300" height="7.900" fill="#88c010"/><rect x="341.17" y="0" width="7.300" height="7.900" fill="#a8d468"/><rect x="349.29" y="0" width="7.300" height="7.900" fill="#b0d838"/><rect x="357.41" y="0" width="7.300" height="7.900" fill="#c8e8c0"/><rect x="365.53" y="0" width="7.300" height="7.900" fill="#e04820"/><rect x="373.66" y="0" width="7.300" height="7.900" fill="#f06808"/><rect x="381.78" y="0" width="7.300" height="7.900" fill="#f08000"/><rect x="389.90" y="0" width="7.300" height="7.900" fill="#f89850"/><rect x="398.03" y="0" width="7.300" height="7.900" fill="#f8a800"/><rect x="406.15" y="0" width="7.300" height="7.900" fill="#ffb000"/><rect x="414.27" y="0" width="7.300" height="7.900" fill="#ffb830"/><rect x="422.40" y="0" width="7.300" height="7.900" fill="#ffc828"/><rect x="430.52" y="0" width="7.300" height="7.900" fill="#ffd800"/><rect x="438.64" y="0" width="7.300" height="7.900" fill="#ffe800"/><rect x="446.76" y="0" width="7.300" height="7.900" fill="#fff078"/><rect x="454.89" y="0" width="7.300" height="7.900" fill="#ffc868"/><rect x="463.01" y="0" width="7.300" height="7.900" fill="#f0c888"/><rect x="471.13" y="0" width="7.300" height="7.900" fill="#ffd8a0"/><rect x="479.26" y="0" width="7.300" height="7.900" fill="#ffe8d0"/><rect x="487.38" y="0" width="7.300" height="7.900" fill="#702070"/><rect x="495.50" y="0" width="7.300" height="7.900" fill="#803080"/><rect x="503.63" y="0" width="7.300" height="7.900" fill="#603098"/><rect x="511.75" y="0" width="7.300" height="7.900" fill="#7048a0"/><rect x="519.87" y="0" width="7.300" height="7.900" fill="#9058a0"/><rect x="528.00" y="0" width="7.300" height="7.900" fill="#a04880"/><rect x="536.12" y="0" width="7.300" height="7.900" fill="#d060a0"/><rect x="544.24" y="0" width="7.300" height="7.900" fill="#a080c8"/><rect x="552.36" y="0" width="7.300" height="7.900" fill="#c8a0c8"/><rect x="560.49" y="0" width="7.300" height="7.900" fill="#f0c0d8"/><rect x="568.61" y="0" width="7.300" height="7.900" fill="#502010"/></svg>
<div style="left:589.5px;top:75.5px;width:10.5px;height:351.5px;background:#e6e9ef;"></div>
<div style="left:590px;top:78.5px;width:10.5px;height:60.3px;background:linear-gradient(to right,#fff0a8,#ffe684 40%,#ffe278);border:1px solid #e6cc5c;border-right:none;border-radius:2px 0 0 2px;"></div>
<span class="t" style="left:598.200px;top:90.30px;font-size:6.400px;line-height:8px;height:8px;color:#3a3a3a;font-family:'Liberation Serif', serif;transform-origin:0 0;transform:rotate(90deg);letter-spacing:-0.012px;">Dynamic Help</span>
<div style="left:590px;top:146px;width:10.5px;height:64px;background:linear-gradient(to right,#fff0a8,#ffe684 40%,#ffe278);border:1px solid #e6cc5c;border-right:none;border-radius:2px 0 0 2px;"></div>
<span class="t" style="left:598.200px;top:160.00px;font-size:6.400px;line-height:8px;height:8px;color:#3a3a3a;font-family:'Liberation Serif', serif;transform-origin:0 0;transform:rotate(90deg);letter-spacing:0.277px;">Export Office</span>
<svg style="left:591.5px;top:80px" width="8" height="8.5" viewBox="0 0 8 8.5"><path d="M.5 1h4.500l2 2v5h-6.500z" fill="#eaf2fc" stroke="#6a8ac0" stroke-width=".5"/><path d="M3.200 3.200c0-1.600 2.600-1.600 2.600 0c0 1-1.300 1-1.300 2.200" fill="none" stroke="#2a62b4" stroke-width=".9"/><circle cx="4.500" cy="6.800" r=".6" fill="#2a62b4"/></svg>
<svg style="left:591.5px;top:149px" width="8" height="8.5" viewBox="0 0 8 8.5"><path d="M2.500 .5h4l1.200 1.200v6h-5.200z" fill="#f0f4fa" stroke="#8a98b4" stroke-width=".5"/><circle cx="3" cy="4.500" r="2.600" fill="#38a848" stroke="#1a7828" stroke-width=".4"/><path d="M1.600 4.500h2.400M3 3.300l1.300 1.200l-1.300 1.200" fill="none" stroke="#fff" stroke-width=".7"/></svg>
<div style="left:0px;top:426.8px;width:600px;height:12.2px;background:linear-gradient(to bottom,#d9dde6 0%,#cfd4de 50%,#c6ccd8 100%);border-top:1px solid #b4bac8;"></div>
<span class="t" style="left:2.00px;top:429.98px;font-size:6.7px;line-height:8.71px;color:#1a4cc8;letter-spacing:-0.027px;text-decoration:underline;">www.edrawsoft.com</span>
<div style="left:65px;top:428.5px;width:1px;height:9.5px;background:#aab0be;"></div>
<div style="left:66px;top:428.5px;width:1px;height:9.5px;background:#eef0f5;"></div>
<span class="t" style="left:71.50px;top:429.98px;font-size:6.7px;line-height:8.71px;color:#2a2e38;letter-spacing:-0.159px;">Page 1/1</span>
<span class="t" style="left:106.70px;top:429.98px;font-size:6.7px;line-height:8.71px;color:#2a2e38;letter-spacing:-0.159px;">X=282, Y=80</span>
<div style="left:412.5px;top:428.5px;width:1px;height:9.5px;background:#aab0be;"></div>
<div style="left:413.5px;top:428.5px;width:1px;height:9.5px;background:#eef0f5;"></div>
<div style="left:417.8px;top:428.3px;width:10.5px;height:10px;border:1px solid #e0a830;border-radius:1.500px;background:linear-gradient(to bottom,#fdeaa8,#f8cc50);"></div>
<svg style="left:420.3px;top:430.5px" width="5.5" height="5.5" viewBox="0 0 5.5 5.5"><rect x=".3" y=".3" width="4.900" height="4.900" fill="#e8e8e0" stroke="#666" stroke-width=".6"/><path d="M1.200 1.500h3M1.200 2.700h3M1.200 3.900h3" stroke="#888" stroke-width=".4"/></svg>
<svg style="left:431px;top:430.5px" width="6" height="5.5" viewBox="0 0 6 5.5"><rect x=".3" y=".3" width="5.400" height="4.900" fill="#f4f4f4" stroke="#555" stroke-width=".6"/><rect x="3" y="1.300" width="2" height="2.900" fill="#555"/></svg>
<svg style="left:442px;top:430px" width="6" height="6.5" viewBox="0 0 6 6.5"><path d="M.3 .5h5.400M1 .5v2.500h4v-2.500M3 3v2M1.500 5.800h3" fill="none" stroke="#444" stroke-width=".7"/></svg>
<span class="t" style="left:456.70px;top:429.98px;font-size:6.7px;line-height:8.71px;color:#2a2e38;letter-spacing:-0.362px;">70%</span>
<svg style="left:479.5px;top:430px" width="7" height="7" viewBox="0 0 7 7"><circle cx="3.500" cy="3.500" r="3" fill="#f4f5f8" stroke="#888e9c" stroke-width=".6"/><path d="M1.800 3.500h3.400" stroke="#444" stroke-width=".9"/></svg>
<div style="left:489px;top:433.2px;width:46px;height:1px;background:#8a909e;"></div>
<div style="left:512px;top:431.5px;width:1px;height:4.5px;background:#8a909e;"></div>
<svg style="left:503px;top:429.5px" width="5" height="8" viewBox="0 0 5 8"><path d="M.4 .4h4.200v4.800l-2.100 2.300l-2.100-2.300z" fill="#f4f5f8" stroke="#6a7080" stroke-width=".6"/></svg>
<svg style="left:537.5px;top:430px" width="7" height="7" viewBox="0 0 7 7"><circle cx="3.500" cy="3.500" r="3" fill="#f4f5f8" stroke="#888e9c" stroke-width=".6"/><path d="M1.800 3.500h3.400M3.500 1.800v3.400" stroke="#444" stroke-width=".9"/></svg>
<svg style="left:547.5px;top:429.8px" width="7.5" height="7.5" viewBox="0 0 7.5 7.5"><rect x=".3" y=".3" width="6.900" height="6.900" rx=".8" fill="#3a80d8" stroke="#1a58a8" stroke-width=".5"/><rect x="2.300" y="2.300" width="3" height="3" fill="#d8e8fc"/><path d="M1.200 2.500v-1.300h1.300M5 1.200h1.300v1.300M6.300 5v1.300h-1.300M2.500 6.300h-1.300v-1.300" fill="none" stroke="#fff" stroke-width=".6"/></svg>
<svg style="left:558.5px;top:429.5px" width="8" height="8" viewBox="0 0 8 8"><rect x=".3" y=".3" width="5" height="5.500" fill="#e0ecfa" stroke="#7a98c8" stroke-width=".5"/><circle cx="4" cy="4" r="2" fill="#c8dcf4" stroke="#555" stroke-width=".6"/><path d="M5.500 5.500l2 2" stroke="#444" stroke-width="1"/></svg>
<svg style="left:570px;top:430.5px" width="6.5" height="6.5" viewBox="0 0 6.5 6.5"><rect x=".3" y=".3" width="5.900" height="5.900" fill="#5a88c8" stroke="#3a68a8" stroke-width=".4"/></svg>
<div style="left:578px;top:428.3px;width:11px;height:10px;border:1px solid #e0a830;border-radius:1.500px;background:linear-gradient(to bottom,#fde28a,#f8c840);"></div>
<svg style="left:580.5px;top:430.5px" width="6.5" height="6" viewBox="0 0 6.5 6"><rect x=".8" y="1" width="4.800" height="4" fill="none" stroke="#6a5818" stroke-width=".7"/><rect x="4" y=".3" width="2" height="2" fill="#6a5818"/></svg>
<svg style="left:593px;top:432px" width="6" height="6" viewBox="0 0 6 6"><path d="M5.500 1l-4.500 4.500M5.500 3.200l-2.300 2.300" stroke="#9aa0ae" stroke-width=".7"/></svg>
</div>
</body></html>
